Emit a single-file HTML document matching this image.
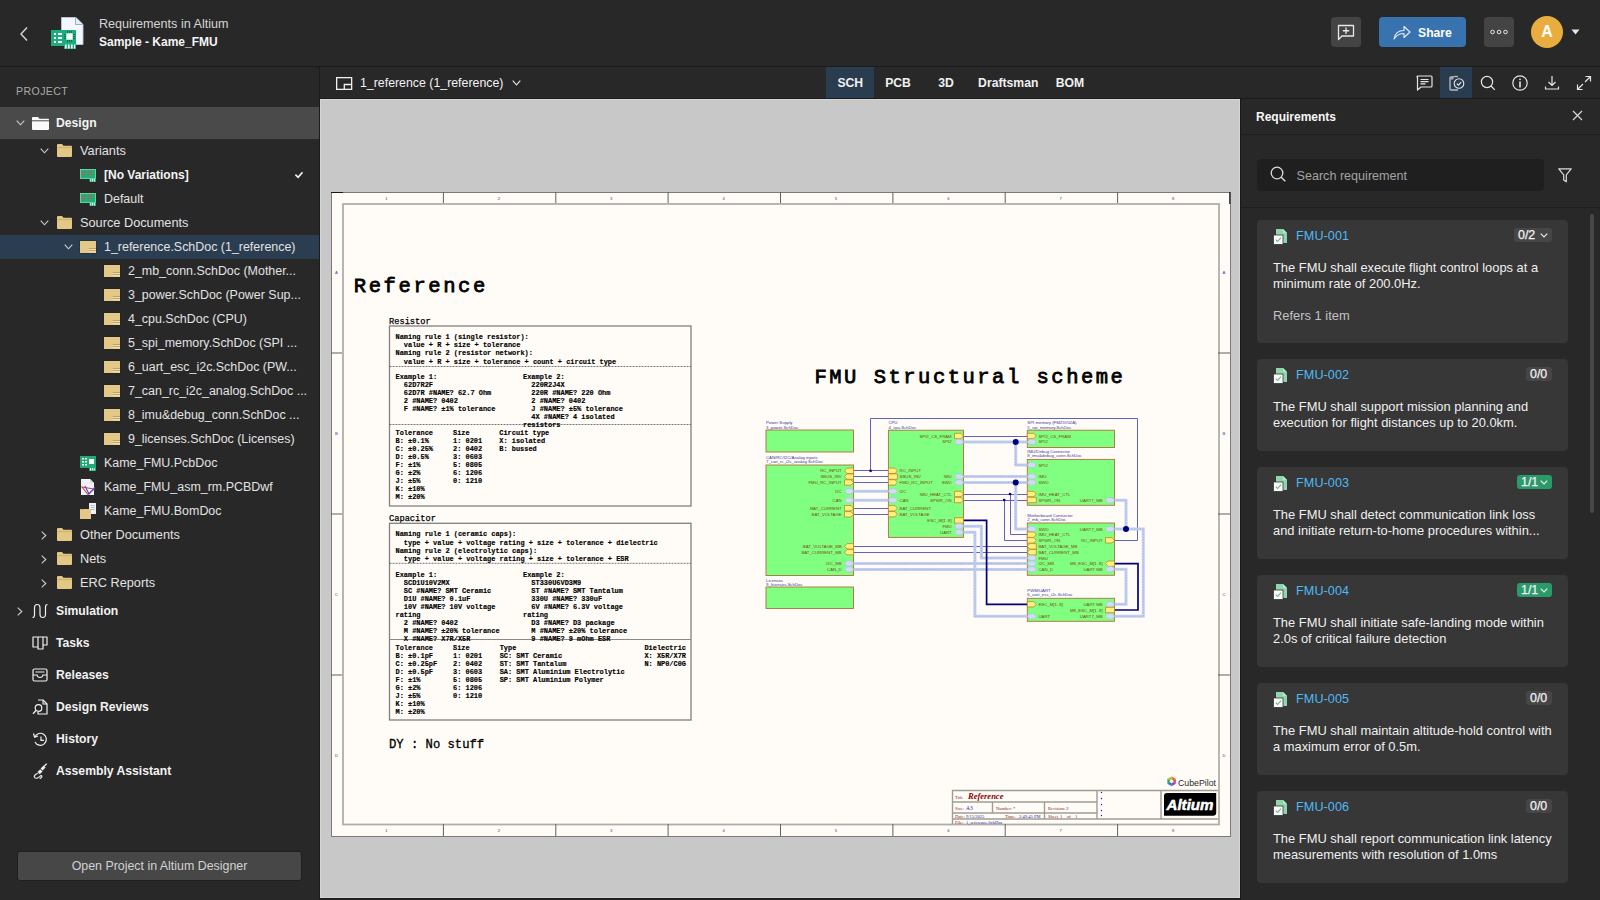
<!DOCTYPE html>
<html><head><meta charset="utf-8">
<style>
*{margin:0;padding:0;box-sizing:border-box}
html,body{width:1600px;height:900px;overflow:hidden;background:#282828;font-family:"Liberation Sans",sans-serif;color:#e0e0e0}
.a{position:absolute}
#hdr{left:0;top:0;width:1600px;height:67px;background:#282828;border-bottom:1px solid #1b1b1b}
#side{left:0;top:67px;width:320px;height:833px;background:#282828;border-right:1px solid #1b1b1b}
#tb{left:320px;top:67px;width:1280px;height:32px;background:#282828;border-bottom:1px solid #1b1b1b}
#canvas{left:320px;top:99px;width:920px;height:800px;background:#c8c8c8;overflow:hidden;border-bottom:1px solid #181818}
#cvhl{left:320px;top:99px;width:920px;height:799px;border:1px solid #d6d6d6;pointer-events:none}
#rp{left:1240px;top:99px;width:360px;height:801px;background:#282828;border-left:1px solid #181818}
.row{position:absolute;left:0;width:319px;height:24px;font-size:12.6px;line-height:24px;color:#dcdcdc;white-space:nowrap}
.row span{position:absolute;top:0}
.chev{position:absolute;width:8px;height:8px}
.card{position:absolute;left:17px;width:311px;background:#363636;border-radius:6px}
.card .id{position:absolute;left:40px;top:7px;font-size:12.2px;color:#5cb8ef;line-height:16px}
.card .txt{position:absolute;left:16px;top:39px;width:290px;font-size:12.6px;line-height:16px;color:#ececec}
.badge{position:absolute;top:8px;height:14px;border-radius:3px;background:#424242;font-size:11.5px;line-height:14px;color:#e6e6e6;padding:0 4px;font-weight:bold}
.badge.g{background:#2c9a6c}
.tab{position:absolute;top:1px;height:31px;line-height:31px;font-size:12.2px;font-weight:bold;color:#f0f0f0;text-align:center}
.ib{position:absolute;top:0;width:32px;height:31px}
.ni{position:absolute;left:0;width:319px;height:32px;font-size:12px;font-weight:bold;color:#f2f2f2;line-height:32px}
</style></head><body>

<!-- HEADER -->
<div id="hdr" class="a">
  <svg class="a" style="left:18px;top:26px" width="12" height="16" viewBox="0 0 12 16"><path d="M9 1.5 L3 8 L9 14.5" fill="none" stroke="#d8d8d8" stroke-width="1.4"/></svg>
  <svg class="a" style="left:48px;top:14px" width="40" height="38" viewBox="48 14 40 38">
    <path d="M61.5 17.5 H76 L83 24.5 V44.5 H61.5 Z" fill="#f2f8fd" stroke="#b8c6d8" stroke-width="0.9"/>
    <path d="M75.5 17.5 V24.5 H82.5" fill="#e4edf6" stroke="#97a6ba" stroke-width="0.9"/>
    <rect x="51" y="30" width="25" height="16" fill="#1bae7c"/>
    <rect x="64" y="44" width="12" height="5" fill="#1bae7c"/>
    <rect x="54" y="33" width="2" height="2" fill="#fff"/><rect x="58" y="33" width="4" height="2" fill="#fff"/>
    <rect x="54" y="37" width="2" height="2" fill="#fff"/><rect x="58" y="37" width="4" height="2" fill="#fff"/>
    <rect x="54" y="41" width="2" height="2" fill="#fff"/><rect x="58" y="41" width="4" height="2" fill="#fff"/>
    <path d="M67.5 31 V33 M69.5 31 V33 M71.5 31 V33 M67.5 40 V42 M69.5 40 V42 M71.5 40 V42 M64 34.5 H66 M64 36.5 H66 M64 38.5 H66 M73 34.5 H75 M73 36.5 H75 M73 38.5 H75" stroke="#0b5c3e" stroke-width="0.8"/>
    <rect x="66.3" y="33.3" width="6.4" height="6.4" fill="#fbfbfb"/>
    <rect x="65" y="44.5" width="1.6" height="4" fill="#fff"/><rect x="68" y="44.5" width="1.6" height="4" fill="#fff"/><rect x="71" y="44.5" width="1.6" height="4" fill="#fff"/><rect x="74" y="44.5" width="1.2" height="4" fill="#fff"/>
  </svg>
  <div class="a" style="left:99px;top:16px;font-size:12.6px;color:#d6d6d6;line-height:17px;white-space:nowrap">Requirements in Altium</div>
  <div class="a" style="left:99px;top:34px;font-size:12px;font-weight:bold;color:#f4f4f4;line-height:17px;white-space:nowrap">Sample - Kame_FMU</div>

  <div class="a" style="left:1331px;top:17px;width:30px;height:30px;border-radius:4px;background:#444"></div>
  <svg class="a" style="left:1337px;top:24px" width="18" height="18" viewBox="0 0 18 18"><path d="M1.5 1.5 H16.5 V12 H5 L1.5 15.5 Z" fill="none" stroke="#e8e8e8" stroke-width="1.3" stroke-linejoin="round"/><path d="M9 3.5 V10 M5.8 6.75 H12.2" stroke="#e8e8e8" stroke-width="1.3"/></svg>
  <div class="a" style="left:1379px;top:17px;width:87px;height:30px;border-radius:4px;background:#3873b0"></div>
  <svg class="a" style="left:1393px;top:25px" width="18" height="15" viewBox="0 0 18 15"><path d="M1 14 C2 8 6 5.5 11 5.5 V1.5 L17 7 L11 12.5 V8.5 C7 8.5 3.5 10 1 14 Z" fill="none" stroke="#e8eef6" stroke-width="1.1" stroke-linejoin="round"/></svg>
  <div class="a" style="left:1418px;top:24.5px;font-size:12.2px;font-weight:bold;color:#fff;line-height:17px">Share</div>
  <div class="a" style="left:1484px;top:17px;width:30px;height:30px;border-radius:4px;background:#444"></div>
  <svg class="a" style="left:1489px;top:29px" width="20" height="6" viewBox="0 0 20 6"><circle cx="3.5" cy="3" r="1.8" fill="none" stroke="#e8e8e8" stroke-width="1"/><circle cx="10" cy="3" r="1.8" fill="none" stroke="#e8e8e8" stroke-width="1"/><circle cx="16.5" cy="3" r="1.8" fill="none" stroke="#e8e8e8" stroke-width="1"/></svg>
  <div class="a" style="left:1531px;top:16px;width:32px;height:32px;border-radius:50%;background:#e8ad3e;color:#fff;font-size:16px;font-weight:bold;text-align:center;line-height:32px">A</div>
  <svg class="a" style="left:1571px;top:29px" width="9" height="6" viewBox="0 0 9 6"><path d="M0.5 0.5 H8.5 L4.5 5.5 Z" fill="#e8e8e8"/></svg>
</div>

<!-- SIDEBAR -->
<div id="side" class="a">
<div class="a" style="left:16px;top:17px;font-size:10.6px;letter-spacing:0.4px;color:#a9a9a9;line-height:14px">PROJECT</div>
<div class="a" style="left:0;top:40px;width:319px;height:32px;background:#4a4a4a"></div>
<svg class="a" style="left:16px;top:53px" width="9" height="6" viewBox="0 0 9 6"><path d="M0.7 0.7 L4.5 4.8 L8.3 0.7" fill="none" stroke="#cfcfcf" stroke-width="1.1"/></svg>
<svg class="a" style="left:32px;top:50px" width="17" height="13" viewBox="0 0 17 13"><path d="M0 1 Q0 0 1 0 H6 L7.5 1.8 H16 Q17 1.8 17 2.8 V12 Q17 13 16 13 H1 Q0 13 0 12 Z" fill="#fafafa"/><rect x="0" y="3.3" width="17" height="1" fill="#4a4a4a"/></svg>
<div class="a" style="left:56px;top:47px;font-size:12.2px;font-weight:bold;color:#f4f4f4;line-height:18px">Design</div>
<div class="a" style="left:0;top:168px;width:319px;height:24px;background:#2a3d51"></div>
<svg class="a" style="left:40px;top:81px" width="9" height="6" viewBox="0 0 9 6"><path d="M0.7 0.7 L4.5 4.8 L8.3 0.7" fill="none" stroke="#cfcfcf" stroke-width="1.1"/></svg>
<svg class="a" style="left:57px;top:77px" width="15" height="13" viewBox="0 0 15 13"><path d="M0 1 Q0 0 1 0 H5 L6.5 1.8 H14 Q15 1.8 15 2.8 V12 Q15 13 14 13 H1 Q0 13 0 12 Z" fill="#e2c787"/><rect x="0" y="3.2" width="15" height="0.9" fill="#c9ad6a"/></svg>
<div class="a" style="left:80px;top:75px;font-size:12.45px;color:#e2e2e2;line-height:18px;white-space:nowrap;font-size:12.75px;">Variants</div>
<svg class="a" style="left:80px;top:102px" width="16" height="13" viewBox="0 0 16 13"><rect x="0" y="0" width="16" height="10" fill="#1fae78"/><rect x="9.5" y="8" width="6.5" height="5" fill="#1fae78"/><rect x="0.5" y="0.5" width="15" height="9" fill="none" stroke="#8adcb8" stroke-width="0.7"/><path d="M1.8 2.5 L5.2 6.5 M5.2 2.5 L1.8 6.5 M8.5 1.8 L11.9 5.8 M11.9 1.8 L8.5 5.8" stroke="#f04848" stroke-width="1"/><path d="M10.8 10 V12.5 M12.6 10 V12.5 M14.4 10 V12.5" stroke="#fff" stroke-width="0.9"/></svg>
<div class="a" style="left:104px;top:99px;font-size:12.45px;color:#e2e2e2;line-height:18px;white-space:nowrap;font-weight:bold;font-size:12px;color:#f4f4f4;">[No Variations]</div>
<svg class="a" style="left:80px;top:126px" width="16" height="13" viewBox="0 0 16 13"><rect x="0" y="0" width="16" height="10" fill="#1fae78"/><rect x="9.5" y="8" width="6.5" height="5" fill="#1fae78"/><rect x="0.5" y="0.5" width="15" height="9" fill="none" stroke="#8adcb8" stroke-width="0.7"/><path d="M1.8 2.5 L5.2 6.5 M5.2 2.5 L1.8 6.5 M8.5 1.8 L11.9 5.8 M11.9 1.8 L8.5 5.8" stroke="#f04848" stroke-width="1"/><path d="M10.8 10 V12.5 M12.6 10 V12.5 M14.4 10 V12.5" stroke="#fff" stroke-width="0.9"/></svg>
<div class="a" style="left:104px;top:123px;font-size:12.45px;color:#e2e2e2;line-height:18px;white-space:nowrap;">Default</div>
<svg class="a" style="left:40px;top:153px" width="9" height="6" viewBox="0 0 9 6"><path d="M0.7 0.7 L4.5 4.8 L8.3 0.7" fill="none" stroke="#cfcfcf" stroke-width="1.1"/></svg>
<svg class="a" style="left:57px;top:149px" width="15" height="13" viewBox="0 0 15 13"><path d="M0 1 Q0 0 1 0 H5 L6.5 1.8 H14 Q15 1.8 15 2.8 V12 Q15 13 14 13 H1 Q0 13 0 12 Z" fill="#e2c787"/><rect x="0" y="3.2" width="15" height="0.9" fill="#c9ad6a"/></svg>
<div class="a" style="left:80px;top:147px;font-size:12.45px;color:#e2e2e2;line-height:18px;white-space:nowrap;font-size:12.75px;">Source Documents</div>
<svg class="a" style="left:64px;top:177px" width="9" height="6" viewBox="0 0 9 6"><path d="M0.7 0.7 L4.5 4.8 L8.3 0.7" fill="none" stroke="#cfcfcf" stroke-width="1.1"/></svg>
<svg class="a" style="left:79px;top:173px" width="18" height="14" viewBox="-1 -1 18 14"><rect x="-0.5" y="-0.5" width="17" height="13" fill="#1f1f1f" opacity="0.6"/><rect x="0" y="0" width="16" height="12" fill="#e3c888"/><rect x="9" y="7" width="7" height="1" fill="#bba262"/><rect x="9" y="8" width="7" height="1.2" fill="#f0dfae"/><rect x="9" y="9.2" width="7" height="0.9" fill="#bba262"/><rect x="9" y="10.1" width="7" height="1.4" fill="#f0dfae"/></svg>
<div class="a" style="left:104px;top:171px;font-size:12.45px;color:#e2e2e2;line-height:18px;white-space:nowrap;">1_reference.SchDoc (1_reference)</div>
<svg class="a" style="left:103px;top:197px" width="18" height="14" viewBox="-1 -1 18 14"><rect x="-0.5" y="-0.5" width="17" height="13" fill="#1f1f1f" opacity="0.6"/><rect x="0" y="0" width="16" height="12" fill="#e3c888"/><rect x="9" y="7" width="7" height="1" fill="#bba262"/><rect x="9" y="8" width="7" height="1.2" fill="#f0dfae"/><rect x="9" y="9.2" width="7" height="0.9" fill="#bba262"/><rect x="9" y="10.1" width="7" height="1.4" fill="#f0dfae"/></svg>
<div class="a" style="left:128px;top:195px;font-size:12.45px;color:#e2e2e2;line-height:18px;white-space:nowrap;">2_mb_conn.SchDoc (Mother...</div>
<svg class="a" style="left:103px;top:221px" width="18" height="14" viewBox="-1 -1 18 14"><rect x="-0.5" y="-0.5" width="17" height="13" fill="#1f1f1f" opacity="0.6"/><rect x="0" y="0" width="16" height="12" fill="#e3c888"/><rect x="9" y="7" width="7" height="1" fill="#bba262"/><rect x="9" y="8" width="7" height="1.2" fill="#f0dfae"/><rect x="9" y="9.2" width="7" height="0.9" fill="#bba262"/><rect x="9" y="10.1" width="7" height="1.4" fill="#f0dfae"/></svg>
<div class="a" style="left:128px;top:219px;font-size:12.45px;color:#e2e2e2;line-height:18px;white-space:nowrap;">3_power.SchDoc (Power Sup...</div>
<svg class="a" style="left:103px;top:245px" width="18" height="14" viewBox="-1 -1 18 14"><rect x="-0.5" y="-0.5" width="17" height="13" fill="#1f1f1f" opacity="0.6"/><rect x="0" y="0" width="16" height="12" fill="#e3c888"/><rect x="9" y="7" width="7" height="1" fill="#bba262"/><rect x="9" y="8" width="7" height="1.2" fill="#f0dfae"/><rect x="9" y="9.2" width="7" height="0.9" fill="#bba262"/><rect x="9" y="10.1" width="7" height="1.4" fill="#f0dfae"/></svg>
<div class="a" style="left:128px;top:243px;font-size:12.45px;color:#e2e2e2;line-height:18px;white-space:nowrap;">4_cpu.SchDoc (CPU)</div>
<svg class="a" style="left:103px;top:269px" width="18" height="14" viewBox="-1 -1 18 14"><rect x="-0.5" y="-0.5" width="17" height="13" fill="#1f1f1f" opacity="0.6"/><rect x="0" y="0" width="16" height="12" fill="#e3c888"/><rect x="9" y="7" width="7" height="1" fill="#bba262"/><rect x="9" y="8" width="7" height="1.2" fill="#f0dfae"/><rect x="9" y="9.2" width="7" height="0.9" fill="#bba262"/><rect x="9" y="10.1" width="7" height="1.4" fill="#f0dfae"/></svg>
<div class="a" style="left:128px;top:267px;font-size:12.45px;color:#e2e2e2;line-height:18px;white-space:nowrap;">5_spi_memory.SchDoc (SPI ...</div>
<svg class="a" style="left:103px;top:293px" width="18" height="14" viewBox="-1 -1 18 14"><rect x="-0.5" y="-0.5" width="17" height="13" fill="#1f1f1f" opacity="0.6"/><rect x="0" y="0" width="16" height="12" fill="#e3c888"/><rect x="9" y="7" width="7" height="1" fill="#bba262"/><rect x="9" y="8" width="7" height="1.2" fill="#f0dfae"/><rect x="9" y="9.2" width="7" height="0.9" fill="#bba262"/><rect x="9" y="10.1" width="7" height="1.4" fill="#f0dfae"/></svg>
<div class="a" style="left:128px;top:291px;font-size:12.45px;color:#e2e2e2;line-height:18px;white-space:nowrap;">6_uart_esc_i2c.SchDoc (PW...</div>
<svg class="a" style="left:103px;top:317px" width="18" height="14" viewBox="-1 -1 18 14"><rect x="-0.5" y="-0.5" width="17" height="13" fill="#1f1f1f" opacity="0.6"/><rect x="0" y="0" width="16" height="12" fill="#e3c888"/><rect x="9" y="7" width="7" height="1" fill="#bba262"/><rect x="9" y="8" width="7" height="1.2" fill="#f0dfae"/><rect x="9" y="9.2" width="7" height="0.9" fill="#bba262"/><rect x="9" y="10.1" width="7" height="1.4" fill="#f0dfae"/></svg>
<div class="a" style="left:128px;top:315px;font-size:12.45px;color:#e2e2e2;line-height:18px;white-space:nowrap;">7_can_rc_i2c_analog.SchDoc ...</div>
<svg class="a" style="left:103px;top:341px" width="18" height="14" viewBox="-1 -1 18 14"><rect x="-0.5" y="-0.5" width="17" height="13" fill="#1f1f1f" opacity="0.6"/><rect x="0" y="0" width="16" height="12" fill="#e3c888"/><rect x="9" y="7" width="7" height="1" fill="#bba262"/><rect x="9" y="8" width="7" height="1.2" fill="#f0dfae"/><rect x="9" y="9.2" width="7" height="0.9" fill="#bba262"/><rect x="9" y="10.1" width="7" height="1.4" fill="#f0dfae"/></svg>
<div class="a" style="left:128px;top:339px;font-size:12.45px;color:#e2e2e2;line-height:18px;white-space:nowrap;">8_imu&amp;debug_conn.SchDoc ...</div>
<svg class="a" style="left:103px;top:365px" width="18" height="14" viewBox="-1 -1 18 14"><rect x="-0.5" y="-0.5" width="17" height="13" fill="#1f1f1f" opacity="0.6"/><rect x="0" y="0" width="16" height="12" fill="#e3c888"/><rect x="9" y="7" width="7" height="1" fill="#bba262"/><rect x="9" y="8" width="7" height="1.2" fill="#f0dfae"/><rect x="9" y="9.2" width="7" height="0.9" fill="#bba262"/><rect x="9" y="10.1" width="7" height="1.4" fill="#f0dfae"/></svg>
<div class="a" style="left:128px;top:363px;font-size:12.45px;color:#e2e2e2;line-height:18px;white-space:nowrap;">9_licenses.SchDoc (Licenses)</div>
<svg class="a" style="left:80px;top:389px" width="16" height="15" viewBox="0 0 16 15"><rect x="0" y="0" width="16" height="12" fill="#22a872"/><rect x="9" y="10" width="7" height="5" fill="#22a872"/><rect x="2" y="2" width="2" height="1.5" fill="#fff"/><rect x="5" y="2" width="2" height="1.5" fill="#fff"/><rect x="2" y="5" width="2" height="1.5" fill="#fff"/><rect x="5" y="5" width="2" height="1.5" fill="#fff"/><rect x="2" y="8" width="2" height="1.5" fill="#fff"/><rect x="5" y="8" width="2" height="1.5" fill="#fff"/><rect x="9" y="3" width="5" height="5" fill="#fff"/><path d="M10.5 12 V14.5 M12.3 12 V14.5 M14.1 12 V14.5" stroke="#fff" stroke-width="0.9"/></svg>
<div class="a" style="left:104px;top:387px;font-size:12.45px;color:#e2e2e2;line-height:18px;white-space:nowrap;">Kame_FMU.PcbDoc</div>
<svg class="a" style="left:80px;top:412px" width="16" height="16" viewBox="0 0 16 16"><path d="M1 0 H10 L14 4 V16 H1 Z" fill="#f2f2f6"/><path d="M10 0 V4 H14" fill="#d8d8e0"/><path d="M2 8 L14 10 L8 15.5 Z" fill="none" stroke="#e04040" stroke-width="1.1"/><path d="M5 7 L9 15 L15 8" fill="none" stroke="#3a5ad0" stroke-width="1.1"/></svg>
<div class="a" style="left:104px;top:411px;font-size:12.45px;color:#e2e2e2;line-height:18px;white-space:nowrap;">Kame_FMU_asm_rm.PCBDwf</div>
<svg class="a" style="left:80px;top:436px" width="16" height="16" viewBox="0 0 16 16"><path d="M9 0 H16 V11 H9 Z" fill="#eef0f6"/><path d="M10.5 2.5 H14.5 M10.5 4.5 H14.5 M10.5 6.5 H14.5" stroke="#9aa" stroke-width="0.7"/><rect x="0" y="6" width="11" height="10" fill="#e3c888"/><path d="M0 6 H3 L4 7 H11" fill="#c9ad6a"/></svg>
<div class="a" style="left:104px;top:435px;font-size:12.45px;color:#e2e2e2;line-height:18px;white-space:nowrap;">Kame_FMU.BomDoc</div>
<svg class="a" style="left:41px;top:464px" width="6" height="9" viewBox="0 0 6 9"><path d="M0.7 0.7 L4.8 4.5 L0.7 8.3" fill="none" stroke="#cfcfcf" stroke-width="1.1"/></svg>
<svg class="a" style="left:57px;top:461px" width="15" height="13" viewBox="0 0 15 13"><path d="M0 1 Q0 0 1 0 H5 L6.5 1.8 H14 Q15 1.8 15 2.8 V12 Q15 13 14 13 H1 Q0 13 0 12 Z" fill="#e2c787"/><rect x="0" y="3.2" width="15" height="0.9" fill="#c9ad6a"/></svg>
<div class="a" style="left:80px;top:459px;font-size:12.45px;color:#e2e2e2;line-height:18px;white-space:nowrap;font-size:12.75px;">Other Documents</div>
<svg class="a" style="left:41px;top:488px" width="6" height="9" viewBox="0 0 6 9"><path d="M0.7 0.7 L4.8 4.5 L0.7 8.3" fill="none" stroke="#cfcfcf" stroke-width="1.1"/></svg>
<svg class="a" style="left:57px;top:485px" width="15" height="13" viewBox="0 0 15 13"><path d="M0 1 Q0 0 1 0 H5 L6.5 1.8 H14 Q15 1.8 15 2.8 V12 Q15 13 14 13 H1 Q0 13 0 12 Z" fill="#e2c787"/><rect x="0" y="3.2" width="15" height="0.9" fill="#c9ad6a"/></svg>
<div class="a" style="left:80px;top:483px;font-size:12.45px;color:#e2e2e2;line-height:18px;white-space:nowrap;font-size:12.75px;">Nets</div>
<svg class="a" style="left:41px;top:512px" width="6" height="9" viewBox="0 0 6 9"><path d="M0.7 0.7 L4.8 4.5 L0.7 8.3" fill="none" stroke="#cfcfcf" stroke-width="1.1"/></svg>
<svg class="a" style="left:57px;top:509px" width="15" height="13" viewBox="0 0 15 13"><path d="M0 1 Q0 0 1 0 H5 L6.5 1.8 H14 Q15 1.8 15 2.8 V12 Q15 13 14 13 H1 Q0 13 0 12 Z" fill="#e2c787"/><rect x="0" y="3.2" width="15" height="0.9" fill="#c9ad6a"/></svg>
<div class="a" style="left:80px;top:507px;font-size:12.45px;color:#e2e2e2;line-height:18px;white-space:nowrap;font-size:12.75px;">ERC Reports</div>
<svg class="a" style="left:293px;top:104px" width="10" height="8" viewBox="0 0 10 8"><path d="M2.4 3.7 L5.1 6.3 L9.5 1.3" fill="none" stroke="#f4f4f4" stroke-width="1.6"/></svg>
<svg class="a" style="left:17px;top:540px" width="6" height="9" viewBox="0 0 6 9"><path d="M0.7 0.7 L4.8 4.5 L0.7 8.3" fill="none" stroke="#cfcfcf" stroke-width="1.1"/></svg>
<svg class="a" style="left:32px;top:536px" width="16" height="16" viewBox="0 0 16 16"><path d="M0.5 14.5 Q2.5 14.5 2.5 12 V5 Q2.5 1.5 5.25 1.5 Q8 1.5 8 5 V11 Q8 14.5 10.75 14.5 Q13.5 14.5 13.5 11 V4 Q13.5 1.5 15.5 1.5" fill="none" stroke="#f0f0f0" stroke-width="1.2"/></svg>
<div class="a" style="left:56px;top:535px;font-size:12.2px;font-weight:bold;color:#f2f2f2;line-height:18px;white-space:nowrap">Simulation</div>
<svg class="a" style="left:32px;top:568px" width="16" height="16" viewBox="0 0 16 16"><path d="M1 2 H15 V10 H11 V14 H6 V12 H1 Z" fill="none" stroke="#f0f0f0" stroke-width="1.2" stroke-linejoin="round"/><path d="M6 2 V12 M11 2 V10" stroke="#f0f0f0" stroke-width="1.2"/></svg>
<div class="a" style="left:56px;top:567px;font-size:12.2px;font-weight:bold;color:#f2f2f2;line-height:18px;white-space:nowrap">Tasks</div>
<svg class="a" style="left:32px;top:600px" width="16" height="16" viewBox="0 0 16 16"><rect x="1" y="2" width="14" height="12" rx="1.5" fill="none" stroke="#f0f0f0" stroke-width="1.2"/><path d="M3.5 5 H12.5 M1 8 H5 Q5.5 10.5 8 10.5 Q10.5 10.5 11 8 H15" fill="none" stroke="#f0f0f0" stroke-width="1.2"/></svg>
<div class="a" style="left:56px;top:599px;font-size:12.2px;font-weight:bold;color:#f2f2f2;line-height:18px;white-space:nowrap">Releases</div>
<svg class="a" style="left:32px;top:632px" width="16" height="16" viewBox="0 0 16 16"><path d="M6 1 H11 L15 5 V15 H6 V13" fill="none" stroke="#f0f0f0" stroke-width="1.2" stroke-linejoin="round"/><path d="M11 1 V5 H15" fill="none" stroke="#f0f0f0" stroke-width="1.1"/><circle cx="6.5" cy="9" r="3.3" fill="#282828" stroke="#f0f0f0" stroke-width="1.2"/><path d="M4 11.5 L1 14.8" stroke="#f0f0f0" stroke-width="1.3"/></svg>
<div class="a" style="left:56px;top:631px;font-size:12.2px;font-weight:bold;color:#f2f2f2;line-height:18px;white-space:nowrap">Design Reviews</div>
<svg class="a" style="left:32px;top:664px" width="16" height="16" viewBox="0 0 16 16"><path d="M2.8 6 A6 6 0 1 1 3 11" fill="none" stroke="#f0f0f0" stroke-width="1.2"/><path d="M1.5 2.5 L2.6 6.2 L6 5" fill="none" stroke="#f0f0f0" stroke-width="1.2"/><path d="M9 5.5 V9.3 H12" fill="none" stroke="#f0f0f0" stroke-width="1.2"/></svg>
<div class="a" style="left:56px;top:663px;font-size:12.2px;font-weight:bold;color:#f2f2f2;line-height:18px;white-space:nowrap">History</div>
<svg class="a" style="left:32px;top:696px" width="16" height="16" viewBox="0 0 16 16"><path d="M14.8 0.6 L12.2 3.2" stroke="#f0f0f0" stroke-width="1.3"/><path d="M12.6 3.6 L9.6 6.6" stroke="#f0f0f0" stroke-width="2.8"/><path d="M9.4 7.4 L6.6 10.2" stroke="#f0f0f0" stroke-width="3.2"/><path d="M5.8 10.2 Q2.6 11.2 2.2 13.6 Q2.6 15.6 5 15.2 Q7.2 14.2 8.6 12.8 Q10 12.2 9.8 13.8 Q9.2 15.4 7.6 15.6" fill="none" stroke="#f0f0f0" stroke-width="1.1"/></svg>
<div class="a" style="left:56px;top:695px;font-size:12.2px;font-weight:bold;color:#f2f2f2;line-height:18px;white-space:nowrap">Assembly Assistant</div>
<div class="a" style="left:17px;top:784px;width:285px;height:30px;background:#474747;border:1px solid #1e1e1e;border-radius:3px;font-size:12.4px;color:#d2d2d2;text-align:center;line-height:28px">Open Project in Altium Designer</div>
</div>

<!-- TOOLBAR -->
<div id="tb" class="a">
<svg class="a" style="left:16px;top:10px" width="17" height="13" viewBox="0 0 17 13"><rect x="0.65" y="0.65" width="15" height="11.7" fill="none" stroke="#f0f0f0" stroke-width="1.3"/><path d="M8.3 12.2 V7.5 H15.6" fill="none" stroke="#f0f0f0" stroke-width="1.3"/></svg>
<div class="a" style="left:40px;top:7px;font-size:12.35px;color:#f2f2f2;line-height:18px;white-space:nowrap">1_reference (1_reference)</div>
<svg class="a" style="left:192px;top:13px" width="9" height="6" viewBox="0 0 9 6"><path d="M0.7 0.7 L4.5 4.8 L8.3 0.7" fill="none" stroke="#e0e0e0" stroke-width="1.2"/></svg>
<div class="a" style="left:506px;top:0;width:48px;height:31px;background:#2a3c50"></div>
<div class="tab" style="left:497.5px;width:65.5px">SCH</div>
<div class="tab" style="left:546px;width:64px">PCB</div>
<div class="tab" style="left:598px;width:56px">3D</div>
<div class="tab" style="left:638.5px;width:99.5px">Draftsman</div>
<div class="tab" style="left:716.4000000000001px;width:67.19999999999982px">BOM</div>
<div class="a" style="left:1120px;top:0;width:32px;height:31px;background:#2a3c50"></div>
<svg class="a" style="left:1096px;top:8px" width="17" height="17" viewBox="0 0 17 17"><path d="M1 2 Q1 1 2 1 H15 Q16 1 16 2 V11 Q16 12 15 12 H5 L1.5 15 V2 Z" stroke="#e6e6e6" fill="none" stroke-width="1.2" stroke-linejoin="round"/><path d="M4.5 4.5 H12.5 M4.5 6.7 H12.5 M4.5 8.9 H9.5" stroke="#e6e6e6" fill="none" stroke-width="1.2"/></svg>
<svg class="a" style="left:1128px;top:8px" width="17" height="17" viewBox="0 0 17 17"><path d="M5.5 2 H3 Q2 2 2 3 V14 Q2 15 3 15 H10" stroke="#bdbdbd" fill="none" stroke-width="1.3"/><path d="M2.5 4 L5 1.5 V4 Z" stroke="#bdbdbd" fill="none" stroke-width="1"/><path d="M6 1.5 H10" stroke="#bdbdbd" stroke-width="1.3"/><circle cx="11" cy="8.5" r="4.8" stroke="#e6e6e6" fill="#2a3c50" stroke-width="1.1"/><path d="M8.8 8.6 L10.4 10.2 L13.2 7.2" stroke="#e6e6e6" fill="none" stroke-width="1.2"/></svg>
<svg class="a" style="left:1160px;top:8px" width="17" height="17" viewBox="0 0 17 17"><circle cx="7" cy="7" r="5.6" stroke="#e6e6e6" fill="none" stroke-width="1.2" stroke-width="1.3"/><path d="M11 11 L14.8 14.8" stroke="#e6e6e6" fill="none" stroke-width="1.2" stroke-width="1.4"/></svg>
<svg class="a" style="left:1192px;top:8px" width="17" height="17" viewBox="0 0 17 17"><circle cx="8" cy="8" r="7.2" stroke="#e6e6e6" fill="none" stroke-width="1.2"/><path d="M8 6.5 V12.5" stroke="#e6e6e6" stroke-width="1.6"/><circle cx="8" cy="4.3" r="0.9" fill="#e6e6e6"/></svg>
<svg class="a" style="left:1224px;top:8px" width="17" height="17" viewBox="0 0 17 17"><path d="M8 1 V10.5 M4.5 7 L8 10.5 L11.5 7" stroke="#e6e6e6" fill="none" stroke-width="1.2" stroke-width="1.4"/><path d="M1.5 11.5 V14 H14.5 V11.5" stroke="#e6e6e6" fill="none" stroke-width="1.2" stroke-width="1.3"/></svg>
<svg class="a" style="left:1256px;top:8px" width="17" height="17" viewBox="0 0 17 17"><path d="M9.5 1.5 H14.5 V6.5 M14.5 1.5 L9 7 M6.5 14.5 H1.5 V9.5 M1.5 14.5 L7 9" stroke="#e6e6e6" fill="none" stroke-width="1.2" stroke-width="1.3"/></svg>
</div>

<!-- CANVAS -->
<div id="canvas" class="a">
<svg class="a" style="left:0;top:0" width="920" height="801" viewBox="320 99 920 801">
<rect x="331" y="192" width="899" height="644" fill="#fffcf7"/>
<rect x="331.5" y="192.5" width="899" height="644" fill="none" stroke="#7a7a7a" stroke-width="1"/>
<path d="M331 192.5 H343 M1229.8 192 V204" stroke="#1a1a1a" stroke-width="1.2"/>
<rect x="343" y="204" width="876" height="620.5" fill="none" stroke="#b0aea8" stroke-width="1.8"/>
<path d="M443.4 192 V203 M443.4 824 V836" stroke="#606060" stroke-width="1"/>
<path d="M555.8 192 V203 M555.8 824 V836" stroke="#606060" stroke-width="1"/>
<path d="M668.1 192 V203 M668.1 824 V836" stroke="#606060" stroke-width="1"/>
<path d="M780.5 192 V203 M780.5 824 V836" stroke="#606060" stroke-width="1"/>
<path d="M892.9 192 V203 M892.9 824 V836" stroke="#606060" stroke-width="1"/>
<path d="M1005.2 192 V203 M1005.2 824 V836" stroke="#606060" stroke-width="1"/>
<path d="M1117.6 192 V203 M1117.6 824 V836" stroke="#606060" stroke-width="1"/>
<text x="386.5" y="200" font-family="Liberation Sans" font-size="4.2" fill="#3a3a90" text-anchor="middle">1</text>
<text x="386.5" y="832" font-family="Liberation Sans" font-size="4.2" fill="#3a3a90" text-anchor="middle">1</text>
<text x="498.9" y="200" font-family="Liberation Sans" font-size="4.2" fill="#3a3a90" text-anchor="middle">2</text>
<text x="498.9" y="832" font-family="Liberation Sans" font-size="4.2" fill="#3a3a90" text-anchor="middle">2</text>
<text x="611.2" y="200" font-family="Liberation Sans" font-size="4.2" fill="#3a3a90" text-anchor="middle">3</text>
<text x="611.2" y="832" font-family="Liberation Sans" font-size="4.2" fill="#3a3a90" text-anchor="middle">3</text>
<text x="723.6" y="200" font-family="Liberation Sans" font-size="4.2" fill="#3a3a90" text-anchor="middle">4</text>
<text x="723.6" y="832" font-family="Liberation Sans" font-size="4.2" fill="#3a3a90" text-anchor="middle">4</text>
<text x="836.0" y="200" font-family="Liberation Sans" font-size="4.2" fill="#3a3a90" text-anchor="middle">5</text>
<text x="836.0" y="832" font-family="Liberation Sans" font-size="4.2" fill="#3a3a90" text-anchor="middle">5</text>
<text x="948.4" y="200" font-family="Liberation Sans" font-size="4.2" fill="#3a3a90" text-anchor="middle">6</text>
<text x="948.4" y="832" font-family="Liberation Sans" font-size="4.2" fill="#3a3a90" text-anchor="middle">6</text>
<text x="1060.7" y="200" font-family="Liberation Sans" font-size="4.2" fill="#3a3a90" text-anchor="middle">7</text>
<text x="1060.7" y="832" font-family="Liberation Sans" font-size="4.2" fill="#3a3a90" text-anchor="middle">7</text>
<text x="1173.1" y="200" font-family="Liberation Sans" font-size="4.2" fill="#3a3a90" text-anchor="middle">8</text>
<text x="1173.1" y="832" font-family="Liberation Sans" font-size="4.2" fill="#3a3a90" text-anchor="middle">8</text>
<path d="M331 353.0 H342 M1218 353.0 H1230" stroke="#606060" stroke-width="1"/>
<path d="M331 514.0 H342 M1218 514.0 H1230" stroke="#606060" stroke-width="1"/>
<path d="M331 675.0 H342 M1218 675.0 H1230" stroke="#606060" stroke-width="1"/>
<text x="336.5" y="274.0" font-family="Liberation Sans" font-size="4.2" fill="#3a3a90" text-anchor="middle">A</text>
<text x="1224" y="274.0" font-family="Liberation Sans" font-size="4.2" fill="#3a3a90" text-anchor="middle">A</text>
<text x="336.5" y="435.0" font-family="Liberation Sans" font-size="4.2" fill="#3a3a90" text-anchor="middle">B</text>
<text x="1224" y="435.0" font-family="Liberation Sans" font-size="4.2" fill="#3a3a90" text-anchor="middle">B</text>
<text x="336.5" y="596.0" font-family="Liberation Sans" font-size="4.2" fill="#3a3a90" text-anchor="middle">C</text>
<text x="1224" y="596.0" font-family="Liberation Sans" font-size="4.2" fill="#3a3a90" text-anchor="middle">C</text>
<text x="336.5" y="757.0" font-family="Liberation Sans" font-size="4.2" fill="#3a3a90" text-anchor="middle">D</text>
<text x="1224" y="757.0" font-family="Liberation Sans" font-size="4.2" fill="#3a3a90" text-anchor="middle">D</text>
<text x="353.8" y="292" font-family="Liberation Mono" font-size="20.5" letter-spacing="2.6" fill="#000" stroke="#000" stroke-width="0.8">Reference</text>
<text x="389" y="324" font-family="Liberation Mono" font-size="8.7" fill="#000" stroke="#000" stroke-width="0.25">Resistor</text>
<text x="389" y="520.5" font-family="Liberation Mono" font-size="8.7" fill="#000" stroke="#000" stroke-width="0.25">Capacitor</text>
<text x="389" y="747.6" font-family="Liberation Mono" font-size="12.2" fill="#000" stroke="#000" stroke-width="0.3">DY : No stuff</text>
<rect x="389.5" y="326" width="301.5" height="180" fill="none" stroke="#808080" stroke-width="1.3"/>
<path d="M389.5 366.5 H691 M389.5 424.5 H691" stroke="#555" stroke-width="0.8" stroke-dasharray="2 1"/>
<text x="395.5" y="339.4" font-family="Liberation Mono" font-weight="bold" font-size="6.94" fill="#000" stroke="#000" stroke-width="0.15" xml:space="preserve">Naming rule 1 (single resistor):</text>
<text x="395.5" y="347.4" font-family="Liberation Mono" font-weight="bold" font-size="6.94" fill="#000" stroke="#000" stroke-width="0.15" xml:space="preserve">  value + R + size + tolerance</text>
<text x="395.5" y="355.4" font-family="Liberation Mono" font-weight="bold" font-size="6.94" fill="#000" stroke="#000" stroke-width="0.15" xml:space="preserve">Naming rule 2 (resistor network):</text>
<text x="395.5" y="363.9" font-family="Liberation Mono" font-weight="bold" font-size="6.94" fill="#000" stroke="#000" stroke-width="0.15" xml:space="preserve">  value + R + size + tolerance + count + circuit type</text>
<text x="395.5" y="379.09999999999997" font-family="Liberation Mono" font-weight="bold" font-size="6.94" fill="#000" stroke="#000" stroke-width="0.15" xml:space="preserve">Example 1:</text>
<text x="395.5" y="387.15" font-family="Liberation Mono" font-weight="bold" font-size="6.94" fill="#000" stroke="#000" stroke-width="0.15" xml:space="preserve">  62D7R2F</text>
<text x="395.5" y="395.2" font-family="Liberation Mono" font-weight="bold" font-size="6.94" fill="#000" stroke="#000" stroke-width="0.15" xml:space="preserve">  62D7R #NAME? 62.7 Ohm</text>
<text x="395.5" y="403.24999999999994" font-family="Liberation Mono" font-weight="bold" font-size="6.94" fill="#000" stroke="#000" stroke-width="0.15" xml:space="preserve">  2 #NAME? 0402</text>
<text x="395.5" y="411.29999999999995" font-family="Liberation Mono" font-weight="bold" font-size="6.94" fill="#000" stroke="#000" stroke-width="0.15" xml:space="preserve">  F #NAME? ±1% tolerance</text>
<text x="523" y="379.09999999999997" font-family="Liberation Mono" font-weight="bold" font-size="6.94" fill="#000" stroke="#000" stroke-width="0.15" xml:space="preserve">Example 2:</text>
<text x="523" y="387.15" font-family="Liberation Mono" font-weight="bold" font-size="6.94" fill="#000" stroke="#000" stroke-width="0.15" xml:space="preserve">  220R2J4X</text>
<text x="523" y="395.2" font-family="Liberation Mono" font-weight="bold" font-size="6.94" fill="#000" stroke="#000" stroke-width="0.15" xml:space="preserve">  220R #NAME? 220 Ohm</text>
<text x="523" y="403.24999999999994" font-family="Liberation Mono" font-weight="bold" font-size="6.94" fill="#000" stroke="#000" stroke-width="0.15" xml:space="preserve">  2 #NAME? 0402</text>
<text x="523" y="411.29999999999995" font-family="Liberation Mono" font-weight="bold" font-size="6.94" fill="#000" stroke="#000" stroke-width="0.15" xml:space="preserve">  J #NAME? ±5% tolerance</text>
<text x="523" y="419.34999999999997" font-family="Liberation Mono" font-weight="bold" font-size="6.94" fill="#000" stroke="#000" stroke-width="0.15" xml:space="preserve">  4X #NAME? 4 isolated</text>
<text x="523" y="427.4" font-family="Liberation Mono" font-weight="bold" font-size="6.94" fill="#000" stroke="#000" stroke-width="0.15" xml:space="preserve">resistors</text>
<text x="395.5" y="435.09999999999997" font-family="Liberation Mono" font-weight="bold" font-size="6.94" fill="#000" stroke="#000" stroke-width="0.15" xml:space="preserve">Tolerance</text>
<text x="395.5" y="443.08" font-family="Liberation Mono" font-weight="bold" font-size="6.94" fill="#000" stroke="#000" stroke-width="0.15" xml:space="preserve">B: ±0.1%</text>
<text x="395.5" y="451.05999999999995" font-family="Liberation Mono" font-weight="bold" font-size="6.94" fill="#000" stroke="#000" stroke-width="0.15" xml:space="preserve">C: ±0.25%</text>
<text x="395.5" y="459.03999999999996" font-family="Liberation Mono" font-weight="bold" font-size="6.94" fill="#000" stroke="#000" stroke-width="0.15" xml:space="preserve">D: ±0.5%</text>
<text x="395.5" y="467.02" font-family="Liberation Mono" font-weight="bold" font-size="6.94" fill="#000" stroke="#000" stroke-width="0.15" xml:space="preserve">F: ±1%</text>
<text x="395.5" y="475.0" font-family="Liberation Mono" font-weight="bold" font-size="6.94" fill="#000" stroke="#000" stroke-width="0.15" xml:space="preserve">G: ±2%</text>
<text x="395.5" y="482.97999999999996" font-family="Liberation Mono" font-weight="bold" font-size="6.94" fill="#000" stroke="#000" stroke-width="0.15" xml:space="preserve">J: ±5%</text>
<text x="395.5" y="490.96" font-family="Liberation Mono" font-weight="bold" font-size="6.94" fill="#000" stroke="#000" stroke-width="0.15" xml:space="preserve">K: ±10%</text>
<text x="395.5" y="498.93999999999994" font-family="Liberation Mono" font-weight="bold" font-size="6.94" fill="#000" stroke="#000" stroke-width="0.15" xml:space="preserve">M: ±20%</text>
<text x="453" y="435.09999999999997" font-family="Liberation Mono" font-weight="bold" font-size="6.94" fill="#000" stroke="#000" stroke-width="0.15" xml:space="preserve">Size</text>
<text x="453" y="443.08" font-family="Liberation Mono" font-weight="bold" font-size="6.94" fill="#000" stroke="#000" stroke-width="0.15" xml:space="preserve">1: 0201</text>
<text x="453" y="451.05999999999995" font-family="Liberation Mono" font-weight="bold" font-size="6.94" fill="#000" stroke="#000" stroke-width="0.15" xml:space="preserve">2: 0402</text>
<text x="453" y="459.03999999999996" font-family="Liberation Mono" font-weight="bold" font-size="6.94" fill="#000" stroke="#000" stroke-width="0.15" xml:space="preserve">3: 0603</text>
<text x="453" y="467.02" font-family="Liberation Mono" font-weight="bold" font-size="6.94" fill="#000" stroke="#000" stroke-width="0.15" xml:space="preserve">5: 0805</text>
<text x="453" y="475.0" font-family="Liberation Mono" font-weight="bold" font-size="6.94" fill="#000" stroke="#000" stroke-width="0.15" xml:space="preserve">6: 1206</text>
<text x="453" y="482.97999999999996" font-family="Liberation Mono" font-weight="bold" font-size="6.94" fill="#000" stroke="#000" stroke-width="0.15" xml:space="preserve">0: 1210</text>
<text x="499.3" y="435.09999999999997" font-family="Liberation Mono" font-weight="bold" font-size="6.94" fill="#000" stroke="#000" stroke-width="0.15" xml:space="preserve">Circuit type</text>
<text x="499.3" y="443.08" font-family="Liberation Mono" font-weight="bold" font-size="6.94" fill="#000" stroke="#000" stroke-width="0.15" xml:space="preserve">X: isolated</text>
<text x="499.3" y="451.05999999999995" font-family="Liberation Mono" font-weight="bold" font-size="6.94" fill="#000" stroke="#000" stroke-width="0.15" xml:space="preserve">B: bussed</text>
<rect x="389.5" y="523.3" width="301.5" height="196.7" fill="none" stroke="#808080" stroke-width="1.3"/>
<path d="M389.5 563.3 H691" stroke="#555" stroke-width="0.8" stroke-dasharray="2 1"/>
<path d="M389.5 639.5 H691" stroke="#888" stroke-width="1"/>
<text x="395.5" y="536.4" font-family="Liberation Mono" font-weight="bold" font-size="6.94" fill="#000" stroke="#000" stroke-width="0.15" xml:space="preserve">Naming rule 1 (ceramic caps):</text>
<text x="395.5" y="544.9" font-family="Liberation Mono" font-weight="bold" font-size="6.94" fill="#000" stroke="#000" stroke-width="0.15" xml:space="preserve">  type + value + voltage rating + size + tolerance + dielectric</text>
<text x="395.5" y="553.1" font-family="Liberation Mono" font-weight="bold" font-size="6.94" fill="#000" stroke="#000" stroke-width="0.15" xml:space="preserve">Naming rule 2 (electrolytic caps):</text>
<text x="395.5" y="561.1" font-family="Liberation Mono" font-weight="bold" font-size="6.94" fill="#000" stroke="#000" stroke-width="0.15" xml:space="preserve">  type + value + voltage rating + size + tolerance + ESR</text>
<text x="395.5" y="577.1" font-family="Liberation Mono" font-weight="bold" font-size="6.94" fill="#000" stroke="#000" stroke-width="0.15" xml:space="preserve">Example 1:</text>
<text x="395.5" y="585.1" font-family="Liberation Mono" font-weight="bold" font-size="6.94" fill="#000" stroke="#000" stroke-width="0.15" xml:space="preserve">  SCD1U10V2MX</text>
<text x="395.5" y="593.1" font-family="Liberation Mono" font-weight="bold" font-size="6.94" fill="#000" stroke="#000" stroke-width="0.15" xml:space="preserve">  SC #NAME? SMT Ceramic</text>
<text x="395.5" y="601.1" font-family="Liberation Mono" font-weight="bold" font-size="6.94" fill="#000" stroke="#000" stroke-width="0.15" xml:space="preserve">  D1U #NAME? 0.1uF</text>
<text x="395.5" y="609.1" font-family="Liberation Mono" font-weight="bold" font-size="6.94" fill="#000" stroke="#000" stroke-width="0.15" xml:space="preserve">  10V #NAME? 10V voltage</text>
<text x="395.5" y="617.1" font-family="Liberation Mono" font-weight="bold" font-size="6.94" fill="#000" stroke="#000" stroke-width="0.15" xml:space="preserve">rating</text>
<text x="395.5" y="625.1" font-family="Liberation Mono" font-weight="bold" font-size="6.94" fill="#000" stroke="#000" stroke-width="0.15" xml:space="preserve">  2 #NAME? 0402</text>
<text x="395.5" y="633.1" font-family="Liberation Mono" font-weight="bold" font-size="6.94" fill="#000" stroke="#000" stroke-width="0.15" xml:space="preserve">  M #NAME? ±20% tolerance</text>
<text x="395.5" y="641.1" font-family="Liberation Mono" font-weight="bold" font-size="6.94" fill="#000" stroke="#000" stroke-width="0.15" xml:space="preserve">  X #NAME? X7R/X5R</text>
<text x="523" y="577.1" font-family="Liberation Mono" font-weight="bold" font-size="6.94" fill="#000" stroke="#000" stroke-width="0.15" xml:space="preserve">Example 2:</text>
<text x="523" y="585.1" font-family="Liberation Mono" font-weight="bold" font-size="6.94" fill="#000" stroke="#000" stroke-width="0.15" xml:space="preserve">  ST330U6VD3M9</text>
<text x="523" y="593.1" font-family="Liberation Mono" font-weight="bold" font-size="6.94" fill="#000" stroke="#000" stroke-width="0.15" xml:space="preserve">  ST #NAME? SMT Tantalum</text>
<text x="523" y="601.1" font-family="Liberation Mono" font-weight="bold" font-size="6.94" fill="#000" stroke="#000" stroke-width="0.15" xml:space="preserve">  330U #NAME? 330uF</text>
<text x="523" y="609.1" font-family="Liberation Mono" font-weight="bold" font-size="6.94" fill="#000" stroke="#000" stroke-width="0.15" xml:space="preserve">  6V #NAME? 6.3V voltage</text>
<text x="523" y="617.1" font-family="Liberation Mono" font-weight="bold" font-size="6.94" fill="#000" stroke="#000" stroke-width="0.15" xml:space="preserve">rating</text>
<text x="523" y="625.1" font-family="Liberation Mono" font-weight="bold" font-size="6.94" fill="#000" stroke="#000" stroke-width="0.15" xml:space="preserve">  D3 #NAME? D3 package</text>
<text x="523" y="633.1" font-family="Liberation Mono" font-weight="bold" font-size="6.94" fill="#000" stroke="#000" stroke-width="0.15" xml:space="preserve">  M #NAME? ±20% tolerance</text>
<text x="523" y="641.1" font-family="Liberation Mono" font-weight="bold" font-size="6.94" fill="#000" stroke="#000" stroke-width="0.15" xml:space="preserve">  9 #NAME? 9 mOhm ESR</text>
<text x="395.5" y="649.9" font-family="Liberation Mono" font-weight="bold" font-size="6.94" fill="#000" stroke="#000" stroke-width="0.15" xml:space="preserve">Tolerance</text>
<text x="395.5" y="657.9" font-family="Liberation Mono" font-weight="bold" font-size="6.94" fill="#000" stroke="#000" stroke-width="0.15" xml:space="preserve">B: ±0.1pF</text>
<text x="395.5" y="665.9" font-family="Liberation Mono" font-weight="bold" font-size="6.94" fill="#000" stroke="#000" stroke-width="0.15" xml:space="preserve">C: ±0.25pF</text>
<text x="395.5" y="673.9" font-family="Liberation Mono" font-weight="bold" font-size="6.94" fill="#000" stroke="#000" stroke-width="0.15" xml:space="preserve">D: ±0.5pF</text>
<text x="395.5" y="681.9" font-family="Liberation Mono" font-weight="bold" font-size="6.94" fill="#000" stroke="#000" stroke-width="0.15" xml:space="preserve">F: ±1%</text>
<text x="395.5" y="689.9" font-family="Liberation Mono" font-weight="bold" font-size="6.94" fill="#000" stroke="#000" stroke-width="0.15" xml:space="preserve">G: ±2%</text>
<text x="395.5" y="697.9" font-family="Liberation Mono" font-weight="bold" font-size="6.94" fill="#000" stroke="#000" stroke-width="0.15" xml:space="preserve">J: ±5%</text>
<text x="395.5" y="705.9" font-family="Liberation Mono" font-weight="bold" font-size="6.94" fill="#000" stroke="#000" stroke-width="0.15" xml:space="preserve">K: ±10%</text>
<text x="395.5" y="713.9" font-family="Liberation Mono" font-weight="bold" font-size="6.94" fill="#000" stroke="#000" stroke-width="0.15" xml:space="preserve">M: ±20%</text>
<text x="453" y="649.9" font-family="Liberation Mono" font-weight="bold" font-size="6.94" fill="#000" stroke="#000" stroke-width="0.15" xml:space="preserve">Size</text>
<text x="453" y="657.9" font-family="Liberation Mono" font-weight="bold" font-size="6.94" fill="#000" stroke="#000" stroke-width="0.15" xml:space="preserve">1: 0201</text>
<text x="453" y="665.9" font-family="Liberation Mono" font-weight="bold" font-size="6.94" fill="#000" stroke="#000" stroke-width="0.15" xml:space="preserve">2: 0402</text>
<text x="453" y="673.9" font-family="Liberation Mono" font-weight="bold" font-size="6.94" fill="#000" stroke="#000" stroke-width="0.15" xml:space="preserve">3: 0603</text>
<text x="453" y="681.9" font-family="Liberation Mono" font-weight="bold" font-size="6.94" fill="#000" stroke="#000" stroke-width="0.15" xml:space="preserve">5: 0805</text>
<text x="453" y="689.9" font-family="Liberation Mono" font-weight="bold" font-size="6.94" fill="#000" stroke="#000" stroke-width="0.15" xml:space="preserve">6: 1206</text>
<text x="453" y="697.9" font-family="Liberation Mono" font-weight="bold" font-size="6.94" fill="#000" stroke="#000" stroke-width="0.15" xml:space="preserve">0: 1210</text>
<text x="499.7" y="649.9" font-family="Liberation Mono" font-weight="bold" font-size="6.94" fill="#000" stroke="#000" stroke-width="0.15" xml:space="preserve">Type</text>
<text x="499.7" y="657.9" font-family="Liberation Mono" font-weight="bold" font-size="6.94" fill="#000" stroke="#000" stroke-width="0.15" xml:space="preserve">SC: SMT Ceramic</text>
<text x="499.7" y="665.9" font-family="Liberation Mono" font-weight="bold" font-size="6.94" fill="#000" stroke="#000" stroke-width="0.15" xml:space="preserve">ST: SMT Tantalum</text>
<text x="499.7" y="673.9" font-family="Liberation Mono" font-weight="bold" font-size="6.94" fill="#000" stroke="#000" stroke-width="0.15" xml:space="preserve">SA: SMT Aluminium Electrolytic</text>
<text x="499.7" y="681.9" font-family="Liberation Mono" font-weight="bold" font-size="6.94" fill="#000" stroke="#000" stroke-width="0.15" xml:space="preserve">SP: SMT Aluminium Polymer</text>
<text x="644.4" y="649.9" font-family="Liberation Mono" font-weight="bold" font-size="6.94" fill="#000" stroke="#000" stroke-width="0.15" xml:space="preserve">Dielectric</text>
<text x="644.4" y="657.9" font-family="Liberation Mono" font-weight="bold" font-size="6.94" fill="#000" stroke="#000" stroke-width="0.15" xml:space="preserve">X: X5R/X7R</text>
<text x="644.4" y="665.9" font-family="Liberation Mono" font-weight="bold" font-size="6.94" fill="#000" stroke="#000" stroke-width="0.15" xml:space="preserve">N: NP0/C0G</text>
<text x="814.5" y="382.7" font-family="Liberation Mono" font-size="20.5" letter-spacing="2.5" fill="#000" stroke="#000" stroke-width="0.8">FMU Structural scheme</text>
<rect x="766" y="430" width="87.5" height="22.0" fill="#80ff80" stroke="#b0703a" stroke-width="0.9"/>
<text x="766" y="424.4" font-family="Liberation Sans" font-size="4.3" fill="#3a3aa0">Power Supply</text>
<text x="766" y="429.4" font-family="Liberation Sans" font-size="4.3" fill="#3a3aa0">3_power.SchDoc</text>
<rect x="766" y="465" width="87.5" height="110.5" fill="#80ff80" stroke="#b0703a" stroke-width="0.9"/>
<text x="766" y="458.9" font-family="Liberation Sans" font-size="4.3" fill="#3a3aa0">CAN/RC/I2C/Analog inputs</text>
<text x="766" y="463.4" font-family="Liberation Sans" font-size="4.3" fill="#3a3aa0">7_can_rc_i2c_analog.SchDoc</text>
<rect x="766" y="587" width="87.5" height="21.5" fill="#80ff80" stroke="#b0703a" stroke-width="0.9"/>
<text x="766" y="581.9" font-family="Liberation Sans" font-size="4.3" fill="#3a3aa0">Licenses</text>
<text x="766" y="586.4" font-family="Liberation Sans" font-size="4.3" fill="#3a3aa0">9_licenses.SchDoc</text>
<rect x="888.4" y="430.2" width="75.1" height="107.2" fill="#80ff80" stroke="#b0703a" stroke-width="0.9"/>
<text x="888.4" y="424.4" font-family="Liberation Sans" font-size="4.3" fill="#3a3aa0">CPU</text>
<text x="888.4" y="429.4" font-family="Liberation Sans" font-size="4.3" fill="#3a3aa0">4_cpu.SchDoc</text>
<rect x="1027.3" y="430.2" width="87.2" height="17.3" fill="#80ff80" stroke="#b0703a" stroke-width="0.9"/>
<text x="1027.3" y="424.4" font-family="Liberation Sans" font-size="4.3" fill="#3a3aa0">SPI memory (FM25V02A)</text>
<text x="1027.3" y="429.4" font-family="Liberation Sans" font-size="4.3" fill="#3a3aa0">5_spi_memory.SchDoc</text>
<rect x="1027.3" y="459.4" width="87.2" height="45.9" fill="#80ff80" stroke="#b0703a" stroke-width="0.9"/>
<text x="1027.3" y="452.9" font-family="Liberation Sans" font-size="4.3" fill="#3a3aa0">IMU/Debug Connector</text>
<text x="1027.3" y="457.4" font-family="Liberation Sans" font-size="4.3" fill="#3a3aa0">8_imu&amp;debug_conn.SchDoc</text>
<rect x="1027.3" y="523" width="87.2" height="52.3" fill="#80ff80" stroke="#b0703a" stroke-width="0.9"/>
<text x="1027.3" y="517.4" font-family="Liberation Sans" font-size="4.3" fill="#3a3aa0">Motherboard Connector</text>
<text x="1027.3" y="521.4" font-family="Liberation Sans" font-size="4.3" fill="#3a3aa0">2_mb_conn.SchDoc</text>
<rect x="1027.3" y="598.3" width="87.2" height="23.0" fill="#80ff80" stroke="#b0703a" stroke-width="0.9"/>
<text x="1027.3" y="591.9" font-family="Liberation Sans" font-size="4.3" fill="#3a3aa0">PWM/UART</text>
<text x="1027.3" y="596.4" font-family="Liberation Sans" font-size="4.3" fill="#3a3aa0">6_uart_esc_i2c.SchDoc</text>
<path d="M853.5 470.5 L888.5 470.5" fill="none" stroke="#6262bc" stroke-width="1.0" stroke-linejoin="miter"/>
<path d="M853.5 476.5 L888.5 476.5" fill="none" stroke="#6262bc" stroke-width="1.0" stroke-linejoin="miter"/>
<path d="M853.5 482.5 L888.5 482.5" fill="none" stroke="#6262bc" stroke-width="1.0" stroke-linejoin="miter"/>
<path d="M853.5 508.5 L888.5 508.5" fill="none" stroke="#6262bc" stroke-width="1.0" stroke-linejoin="miter"/>
<path d="M853.5 514.5 L888.5 514.5" fill="none" stroke="#6262bc" stroke-width="1.0" stroke-linejoin="miter"/>
<path d="M870.5 470.5 L870.5 418.5 L1137.5 418.5 L1137.5 540.5 L1114.5 540.5" fill="none" stroke="#6262bc" stroke-width="1.0" stroke-linejoin="miter"/>
<path d="M963.5 436.5 L1027.5 436.5" fill="none" stroke="#6262bc" stroke-width="1.0" stroke-linejoin="miter"/>
<path d="M963.5 494.5 L1027.5 494.5" fill="none" stroke="#6262bc" stroke-width="1.0" stroke-linejoin="miter"/>
<path d="M1010.5 494.5 L1010.5 534.5 L1027.5 534.5" fill="none" stroke="#6262bc" stroke-width="1.0" stroke-linejoin="miter"/>
<path d="M963.5 500.5 L1027.5 500.5" fill="none" stroke="#6262bc" stroke-width="1.0" stroke-linejoin="miter"/>
<path d="M1004.5 500.5 L1004.5 540.5 L1027.5 540.5" fill="none" stroke="#6262bc" stroke-width="1.0" stroke-linejoin="miter"/>
<path d="M853.5 546.5 L1027.5 546.5" fill="none" stroke="#6262bc" stroke-width="1.0" stroke-linejoin="miter"/>
<path d="M853.5 552.5 L1027.5 552.5" fill="none" stroke="#6262bc" stroke-width="1.0" stroke-linejoin="miter"/>
<path d="M853.5 491.3 L888.4 491.3" fill="none" stroke="#c3cff0" stroke-width="3" stroke-linejoin="miter"/>
<path d="M853.5 491.3 L888.4 491.3" fill="none" stroke="#9aaedc" stroke-width="0.8" stroke-dasharray="1.2 1.6"/>
<path d="M853.5 500.2 L888.4 500.2" fill="none" stroke="#c3cff0" stroke-width="3" stroke-linejoin="miter"/>
<path d="M853.5 500.2 L888.4 500.2" fill="none" stroke="#9aaedc" stroke-width="0.8" stroke-dasharray="1.2 1.6"/>
<path d="M963.5 441.9 L1027.3 441.9" fill="none" stroke="#c3cff0" stroke-width="3" stroke-linejoin="miter"/>
<path d="M963.5 441.9 L1027.3 441.9" fill="none" stroke="#9aaedc" stroke-width="0.8" stroke-dasharray="1.2 1.6"/>
<path d="M1015.7 441.9 L1015.7 465 L1027.3 465" fill="none" stroke="#c3cff0" stroke-width="3" stroke-linejoin="miter"/>
<path d="M1015.7 441.9 L1015.7 465 L1027.3 465" fill="none" stroke="#9aaedc" stroke-width="0.8" stroke-dasharray="1.2 1.6"/>
<path d="M963.5 476.5 L1027.3 476.5" fill="none" stroke="#c3cff0" stroke-width="3" stroke-linejoin="miter"/>
<path d="M963.5 476.5 L1027.3 476.5" fill="none" stroke="#9aaedc" stroke-width="0.8" stroke-dasharray="1.2 1.6"/>
<path d="M963.5 482.5 L1027.3 482.5" fill="none" stroke="#c3cff0" stroke-width="3" stroke-linejoin="miter"/>
<path d="M963.5 482.5 L1027.3 482.5" fill="none" stroke="#9aaedc" stroke-width="0.8" stroke-dasharray="1.2 1.6"/>
<path d="M1015.7 482.5 L1015.7 529 L1027.3 529" fill="none" stroke="#c3cff0" stroke-width="3" stroke-linejoin="miter"/>
<path d="M1015.7 482.5 L1015.7 529 L1027.3 529" fill="none" stroke="#9aaedc" stroke-width="0.8" stroke-dasharray="1.2 1.6"/>
<path d="M963.5 526.3 L981.4 526.3 L981.4 558 L1027.3 558" fill="none" stroke="#c3cff0" stroke-width="3" stroke-linejoin="miter"/>
<path d="M963.5 526.3 L981.4 526.3 L981.4 558 L1027.3 558" fill="none" stroke="#9aaedc" stroke-width="0.8" stroke-dasharray="1.2 1.6"/>
<path d="M963.5 532.2 L974.9 532.2 L974.9 616.3 L1027.3 616.3" fill="none" stroke="#c3cff0" stroke-width="3" stroke-linejoin="miter"/>
<path d="M963.5 532.2 L974.9 532.2 L974.9 616.3 L1027.3 616.3" fill="none" stroke="#9aaedc" stroke-width="0.8" stroke-dasharray="1.2 1.6"/>
<path d="M853.5 563.5 L1027.3 563.5" fill="none" stroke="#c3cff0" stroke-width="3" stroke-linejoin="miter"/>
<path d="M853.5 563.5 L1027.3 563.5" fill="none" stroke="#9aaedc" stroke-width="0.8" stroke-dasharray="1.2 1.6"/>
<path d="M853.5 569.4 L1027.3 569.4" fill="none" stroke="#c3cff0" stroke-width="3" stroke-linejoin="miter"/>
<path d="M853.5 569.4 L1027.3 569.4" fill="none" stroke="#9aaedc" stroke-width="0.8" stroke-dasharray="1.2 1.6"/>
<path d="M1114.5 500.2 L1126 500.2 L1126 529" fill="none" stroke="#c3cff0" stroke-width="3" stroke-linejoin="miter"/>
<path d="M1114.5 500.2 L1126 500.2 L1126 529" fill="none" stroke="#9aaedc" stroke-width="0.8" stroke-dasharray="1.2 1.6"/>
<path d="M1114.5 529 L1143.3 529 L1143.3 616.3 L1114.5 616.3" fill="none" stroke="#c3cff0" stroke-width="3" stroke-linejoin="miter"/>
<path d="M1114.5 529 L1143.3 529 L1143.3 616.3 L1114.5 616.3" fill="none" stroke="#9aaedc" stroke-width="0.8" stroke-dasharray="1.2 1.6"/>
<path d="M1114.5 569.3 L1126 569.3 L1126 604.3 L1114.5 604.3" fill="none" stroke="#c3cff0" stroke-width="3" stroke-linejoin="miter"/>
<path d="M1114.5 569.3 L1126 569.3 L1126 604.3 L1114.5 604.3" fill="none" stroke="#9aaedc" stroke-width="0.8" stroke-dasharray="1.2 1.6"/>
<path d="M963.5 520.4 L986.6 520.4 L986.6 604.3 L1027.3 604.3" fill="none" stroke="#00007a" stroke-width="1.7" stroke-linejoin="miter"/>
<path d="M1114.5 563.7 L1138 563.7 L1138 610 L1114.5 610" fill="none" stroke="#00007a" stroke-width="1.7" stroke-linejoin="miter"/>
<circle cx="870.6" cy="470.8" r="1.4" fill="#00007a"/>
<circle cx="1010" cy="494" r="1.3" fill="#00007a"/>
<circle cx="1004.2" cy="500" r="1.3" fill="#00007a"/>
<circle cx="1015.7" cy="441.9" r="3" fill="#00007a"/>
<circle cx="1015.7" cy="482.5" r="3" fill="#00007a"/>
<circle cx="1126" cy="529" r="3" fill="#00007a"/>
<path d="M847.0 468.1 H853.5 V473.5 H847.0 L844.5 470.8 Z" fill="#fff07a" stroke="#b8782a" stroke-width="0.7"/>
<text x="841.7" y="472.3" font-family="Liberation Sans" font-size="4.3" fill="#7a4a10" text-anchor="end">RC_INPUT</text>
<path d="M847.0 473.90000000000003 H853.5 V479.3 H847.0 L844.5 476.6 Z" fill="#fff07a" stroke="#b8782a" stroke-width="0.7"/>
<text x="841.7" y="478.1" font-family="Liberation Sans" font-size="4.3" fill="#7a4a10" text-anchor="end">SBUS_INV</text>
<path d="M844.5 479.8 H851.0 L853.5 482.5 L851.0 485.2 H844.5 Z" fill="#fff07a" stroke="#b8782a" stroke-width="0.7"/>
<text x="841.7" y="484.0" font-family="Liberation Sans" font-size="4.3" fill="#7a4a10" text-anchor="end">FMU_RC_INPUT</text>
<path d="M847.0 488.6 H851.0 L853.5 491.3 L851.0 494.0 H847.0 L844.5 491.3 Z" fill="#d2dcf6" stroke="#a9b9e2" stroke-width="0.6"/>
<text x="841.7" y="492.8" font-family="Liberation Sans" font-size="4.3" fill="#7a4a10" text-anchor="end">I2C</text>
<path d="M847.0 497.6 H851.0 L853.5 500.3 L851.0 503.0 H847.0 L844.5 500.3 Z" fill="#d2dcf6" stroke="#a9b9e2" stroke-width="0.6"/>
<text x="841.7" y="501.8" font-family="Liberation Sans" font-size="4.3" fill="#7a4a10" text-anchor="end">CAN</text>
<path d="M844.5 505.5 H851.0 L853.5 508.2 L851.0 510.9 H844.5 Z" fill="#fff07a" stroke="#b8782a" stroke-width="0.7"/>
<text x="841.7" y="509.7" font-family="Liberation Sans" font-size="4.3" fill="#7a4a10" text-anchor="end">BAT_CURRENT</text>
<path d="M844.5 511.59999999999997 H851.0 L853.5 514.3 L851.0 517.0 H844.5 Z" fill="#fff07a" stroke="#b8782a" stroke-width="0.7"/>
<text x="841.7" y="515.8" font-family="Liberation Sans" font-size="4.3" fill="#7a4a10" text-anchor="end">BAT_VOLTAGE</text>
<path d="M847.0 543.5999999999999 H853.5 V549.0 H847.0 L844.5 546.3 Z" fill="#fff07a" stroke="#b8782a" stroke-width="0.7"/>
<text x="841.7" y="547.8" font-family="Liberation Sans" font-size="4.3" fill="#7a4a10" text-anchor="end">BAT_VOLTAGE_MB</text>
<path d="M847.0 549.5 H853.5 V554.9000000000001 H847.0 L844.5 552.2 Z" fill="#fff07a" stroke="#b8782a" stroke-width="0.7"/>
<text x="841.7" y="553.7" font-family="Liberation Sans" font-size="4.3" fill="#7a4a10" text-anchor="end">BAT_CURRENT_MB</text>
<path d="M847.0 560.8 H851.0 L853.5 563.5 L851.0 566.2 H847.0 L844.5 563.5 Z" fill="#d2dcf6" stroke="#a9b9e2" stroke-width="0.6"/>
<text x="841.7" y="565.0" font-family="Liberation Sans" font-size="4.3" fill="#7a4a10" text-anchor="end">I2C_MB</text>
<path d="M847.0 566.6999999999999 H851.0 L853.5 569.4 L851.0 572.1 H847.0 L844.5 569.4 Z" fill="#d2dcf6" stroke="#a9b9e2" stroke-width="0.6"/>
<text x="841.7" y="570.9" font-family="Liberation Sans" font-size="4.3" fill="#7a4a10" text-anchor="end">CAN_D</text>
<path d="M888.4 468.1 H894.9 L897.4 470.8 L894.9 473.5 H888.4 Z" fill="#fff07a" stroke="#b8782a" stroke-width="0.7"/>
<text x="899.6" y="472.3" font-family="Liberation Sans" font-size="4.3" fill="#7a4a10" text-anchor="start">RC_INPUT</text>
<path d="M888.4 473.90000000000003 H897.4 V479.3 H888.4 Z" fill="#fff07a" stroke="#b8782a" stroke-width="0.7"/>
<text x="899.6" y="478.1" font-family="Liberation Sans" font-size="4.3" fill="#7a4a10" text-anchor="start">SBUS_INV</text>
<path d="M888.4 479.7 H894.9 L897.4 482.4 L894.9 485.09999999999997 H888.4 Z" fill="#fff07a" stroke="#b8782a" stroke-width="0.7"/>
<text x="899.6" y="483.9" font-family="Liberation Sans" font-size="4.3" fill="#7a4a10" text-anchor="start">FMU_RC_INPUT</text>
<path d="M890.9 488.6 H894.9 L897.4 491.3 L894.9 494.0 H890.9 L888.4 491.3 Z" fill="#d2dcf6" stroke="#a9b9e2" stroke-width="0.6"/>
<text x="899.6" y="492.8" font-family="Liberation Sans" font-size="4.3" fill="#7a4a10" text-anchor="start">I2C</text>
<path d="M890.9 497.40000000000003 H894.9 L897.4 500.1 L894.9 502.8 H890.9 L888.4 500.1 Z" fill="#d2dcf6" stroke="#a9b9e2" stroke-width="0.6"/>
<text x="899.6" y="501.6" font-family="Liberation Sans" font-size="4.3" fill="#7a4a10" text-anchor="start">CAN</text>
<path d="M888.4 505.6 H894.9 L897.4 508.3 L894.9 511.0 H888.4 Z" fill="#fff07a" stroke="#b8782a" stroke-width="0.7"/>
<text x="899.6" y="509.8" font-family="Liberation Sans" font-size="4.3" fill="#7a4a10" text-anchor="start">BAT_CURRENT</text>
<path d="M888.4 511.50000000000006 H894.9 L897.4 514.2 L894.9 516.9000000000001 H888.4 Z" fill="#fff07a" stroke="#b8782a" stroke-width="0.7"/>
<text x="899.6" y="515.7" font-family="Liberation Sans" font-size="4.3" fill="#7a4a10" text-anchor="start">BAT_VOLTAGE</text>
<path d="M954.5 433.3 H961.0 L963.5 436 L961.0 438.7 H954.5 Z" fill="#fff07a" stroke="#b8782a" stroke-width="0.7"/>
<text x="951.7" y="437.5" font-family="Liberation Sans" font-size="4.3" fill="#7a4a10" text-anchor="end">SPI2_CS_FRAM</text>
<path d="M957.0 439.2 H961.0 L963.5 441.9 L961.0 444.59999999999997 H957.0 L954.5 441.9 Z" fill="#d2dcf6" stroke="#a9b9e2" stroke-width="0.6"/>
<text x="951.7" y="443.4" font-family="Liberation Sans" font-size="4.3" fill="#7a4a10" text-anchor="end">SPI2</text>
<path d="M957.0 473.8 H961.0 L963.5 476.5 L961.0 479.2 H957.0 L954.5 476.5 Z" fill="#d2dcf6" stroke="#a9b9e2" stroke-width="0.6"/>
<text x="951.7" y="478.0" font-family="Liberation Sans" font-size="4.3" fill="#7a4a10" text-anchor="end">IMU</text>
<path d="M957.0 479.8 H961.0 L963.5 482.5 L961.0 485.2 H957.0 L954.5 482.5 Z" fill="#d2dcf6" stroke="#a9b9e2" stroke-width="0.6"/>
<text x="951.7" y="484.0" font-family="Liberation Sans" font-size="4.3" fill="#7a4a10" text-anchor="end">SWD</text>
<path d="M954.5 491.3 H961.0 L963.5 494 L961.0 496.7 H954.5 Z" fill="#fff07a" stroke="#b8782a" stroke-width="0.7"/>
<text x="951.7" y="495.5" font-family="Liberation Sans" font-size="4.3" fill="#7a4a10" text-anchor="end">IMU_HEAT_CTL</text>
<path d="M954.5 497.3 H961.0 L963.5 500 L961.0 502.7 H954.5 Z" fill="#fff07a" stroke="#b8782a" stroke-width="0.7"/>
<text x="951.7" y="501.5" font-family="Liberation Sans" font-size="4.3" fill="#7a4a10" text-anchor="end">SPWR_ON</text>
<path d="M954.5 517.6999999999999 H963.5 V523.1 H954.5 Z" fill="#fff07a" stroke="#b8782a" stroke-width="0.7"/>
<text x="951.7" y="521.9" font-family="Liberation Sans" font-size="4.3" fill="#7a4a10" text-anchor="end">ESC_M[1..8]</text>
<path d="M957.0 523.5999999999999 H961.0 L963.5 526.3 L961.0 529.0 H957.0 L954.5 526.3 Z" fill="#d2dcf6" stroke="#a9b9e2" stroke-width="0.6"/>
<text x="951.7" y="527.8" font-family="Liberation Sans" font-size="4.3" fill="#7a4a10" text-anchor="end">FMU</text>
<path d="M957.0 529.5 H961.0 L963.5 532.2 L961.0 534.9000000000001 H957.0 L954.5 532.2 Z" fill="#d2dcf6" stroke="#a9b9e2" stroke-width="0.6"/>
<text x="951.7" y="533.7" font-family="Liberation Sans" font-size="4.3" fill="#7a4a10" text-anchor="end">UART</text>
<path d="M1027.3 433.3 H1033.8 L1036.3 436 L1033.8 438.7 H1027.3 Z" fill="#fff07a" stroke="#b8782a" stroke-width="0.7"/>
<text x="1038.5" y="437.5" font-family="Liberation Sans" font-size="4.3" fill="#7a4a10" text-anchor="start">SPI2_CS_FRAM</text>
<path d="M1029.8 439.2 H1033.8 L1036.3 441.9 L1033.8 444.59999999999997 H1029.8 L1027.3 441.9 Z" fill="#d2dcf6" stroke="#a9b9e2" stroke-width="0.6"/>
<text x="1038.5" y="443.4" font-family="Liberation Sans" font-size="4.3" fill="#7a4a10" text-anchor="start">SPI2</text>
<path d="M1029.8 462.3 H1033.8 L1036.3 465 L1033.8 467.7 H1029.8 L1027.3 465 Z" fill="#d2dcf6" stroke="#a9b9e2" stroke-width="0.6"/>
<text x="1038.5" y="466.5" font-family="Liberation Sans" font-size="4.3" fill="#7a4a10" text-anchor="start">SPI2</text>
<path d="M1029.8 473.8 H1033.8 L1036.3 476.5 L1033.8 479.2 H1029.8 L1027.3 476.5 Z" fill="#d2dcf6" stroke="#a9b9e2" stroke-width="0.6"/>
<text x="1038.5" y="478.0" font-family="Liberation Sans" font-size="4.3" fill="#7a4a10" text-anchor="start">IMU</text>
<path d="M1029.8 479.8 H1033.8 L1036.3 482.5 L1033.8 485.2 H1029.8 L1027.3 482.5 Z" fill="#d2dcf6" stroke="#a9b9e2" stroke-width="0.6"/>
<text x="1038.5" y="484.0" font-family="Liberation Sans" font-size="4.3" fill="#7a4a10" text-anchor="start">SWD</text>
<path d="M1027.3 491.3 H1033.8 L1036.3 494 L1033.8 496.7 H1027.3 Z" fill="#fff07a" stroke="#b8782a" stroke-width="0.7"/>
<text x="1038.5" y="495.5" font-family="Liberation Sans" font-size="4.3" fill="#7a4a10" text-anchor="start">IMU_HEAT_CTL</text>
<path d="M1027.3 497.3 H1036.3 V502.7 H1027.3 Z" fill="#fff07a" stroke="#b8782a" stroke-width="0.7"/>
<text x="1038.5" y="501.5" font-family="Liberation Sans" font-size="4.3" fill="#7a4a10" text-anchor="start">SPWR_ON</text>
<path d="M1108.0 497.5 H1112.0 L1114.5 500.2 L1112.0 502.9 H1108.0 L1105.5 500.2 Z" fill="#d2dcf6" stroke="#a9b9e2" stroke-width="0.6"/>
<text x="1102.7" y="501.7" font-family="Liberation Sans" font-size="4.3" fill="#7a4a10" text-anchor="end">UART7_MB</text>
<path d="M1029.8 526.3 H1033.8 L1036.3 529 L1033.8 531.7 H1029.8 L1027.3 529 Z" fill="#d2dcf6" stroke="#a9b9e2" stroke-width="0.6"/>
<text x="1038.5" y="530.5" font-family="Liberation Sans" font-size="4.3" fill="#7a4a10" text-anchor="start">SWD</text>
<path d="M1027.3 532.0 H1033.8 L1036.3 534.7 L1033.8 537.4000000000001 H1027.3 Z" fill="#fff07a" stroke="#b8782a" stroke-width="0.7"/>
<text x="1038.5" y="536.2" font-family="Liberation Sans" font-size="4.3" fill="#7a4a10" text-anchor="start">IMU_HEAT_CTL</text>
<path d="M1027.3 537.5999999999999 H1033.8 L1036.3 540.3 L1033.8 543.0 H1027.3 Z" fill="#fff07a" stroke="#b8782a" stroke-width="0.7"/>
<text x="1038.5" y="541.8" font-family="Liberation Sans" font-size="4.3" fill="#7a4a10" text-anchor="start">SPWR_ON</text>
<path d="M1029.8 543.5999999999999 H1036.3 V549.0 H1029.8 L1027.3 546.3 Z" fill="#fff07a" stroke="#b8782a" stroke-width="0.7"/>
<text x="1038.5" y="547.8" font-family="Liberation Sans" font-size="4.3" fill="#7a4a10" text-anchor="start">BAT_VOLTAGE_MB</text>
<path d="M1029.8 549.5 H1036.3 V554.9000000000001 H1029.8 L1027.3 552.2 Z" fill="#fff07a" stroke="#b8782a" stroke-width="0.7"/>
<text x="1038.5" y="553.7" font-family="Liberation Sans" font-size="4.3" fill="#7a4a10" text-anchor="start">BAT_CURRENT_MB</text>
<path d="M1029.8 555.3 H1033.8 L1036.3 558 L1033.8 560.7 H1029.8 L1027.3 558 Z" fill="#d2dcf6" stroke="#a9b9e2" stroke-width="0.6"/>
<text x="1038.5" y="559.5" font-family="Liberation Sans" font-size="4.3" fill="#7a4a10" text-anchor="start">FMU</text>
<path d="M1029.8 560.9 H1033.8 L1036.3 563.6 L1033.8 566.3000000000001 H1029.8 L1027.3 563.6 Z" fill="#d2dcf6" stroke="#a9b9e2" stroke-width="0.6"/>
<text x="1038.5" y="565.1" font-family="Liberation Sans" font-size="4.3" fill="#7a4a10" text-anchor="start">I2C_MB</text>
<path d="M1029.8 566.5999999999999 H1033.8 L1036.3 569.3 L1033.8 572.0 H1029.8 L1027.3 569.3 Z" fill="#d2dcf6" stroke="#a9b9e2" stroke-width="0.6"/>
<text x="1038.5" y="570.8" font-family="Liberation Sans" font-size="4.3" fill="#7a4a10" text-anchor="start">CAN_D</text>
<path d="M1108.0 526.3 H1112.0 L1114.5 529 L1112.0 531.7 H1108.0 L1105.5 529 Z" fill="#d2dcf6" stroke="#a9b9e2" stroke-width="0.6"/>
<text x="1102.7" y="530.5" font-family="Liberation Sans" font-size="4.3" fill="#7a4a10" text-anchor="end">UART7_MB</text>
<path d="M1105.5 537.5999999999999 H1112.0 L1114.5 540.3 L1112.0 543.0 H1105.5 Z" fill="#fff07a" stroke="#b8782a" stroke-width="0.7"/>
<text x="1102.7" y="541.8" font-family="Liberation Sans" font-size="4.3" fill="#7a4a10" text-anchor="end">RC_INPUT</text>
<path d="M1108.0 561.0 H1114.5 V566.4000000000001 H1108.0 L1105.5 563.7 Z" fill="#fff07a" stroke="#b8782a" stroke-width="0.7"/>
<text x="1102.7" y="565.2" font-family="Liberation Sans" font-size="4.3" fill="#7a4a10" text-anchor="end">M8_ESC_M[1..8]</text>
<path d="M1108.0 566.5999999999999 H1112.0 L1114.5 569.3 L1112.0 572.0 H1108.0 L1105.5 569.3 Z" fill="#d2dcf6" stroke="#a9b9e2" stroke-width="0.6"/>
<text x="1102.7" y="570.8" font-family="Liberation Sans" font-size="4.3" fill="#7a4a10" text-anchor="end">UART MB</text>
<path d="M1027.3 601.5999999999999 H1033.8 L1036.3 604.3 L1033.8 607.0 H1027.3 Z" fill="#fff07a" stroke="#b8782a" stroke-width="0.7"/>
<text x="1038.5" y="605.8" font-family="Liberation Sans" font-size="4.3" fill="#7a4a10" text-anchor="start">ESC_M[1..8]</text>
<path d="M1029.8 613.5999999999999 H1033.8 L1036.3 616.3 L1033.8 619.0 H1029.8 L1027.3 616.3 Z" fill="#d2dcf6" stroke="#a9b9e2" stroke-width="0.6"/>
<text x="1038.5" y="617.8" font-family="Liberation Sans" font-size="4.3" fill="#7a4a10" text-anchor="start">UART</text>
<path d="M1108.0 601.5999999999999 H1112.0 L1114.5 604.3 L1112.0 607.0 H1108.0 L1105.5 604.3 Z" fill="#d2dcf6" stroke="#a9b9e2" stroke-width="0.6"/>
<text x="1102.7" y="605.8" font-family="Liberation Sans" font-size="4.3" fill="#7a4a10" text-anchor="end">UART MB</text>
<path d="M1105.5 607.3 H1114.5 V612.7 H1105.5 Z" fill="#fff07a" stroke="#b8782a" stroke-width="0.7"/>
<text x="1102.7" y="611.5" font-family="Liberation Sans" font-size="4.3" fill="#7a4a10" text-anchor="end">M8_ESC_M[1..8]</text>
<path d="M1108.0 613.5999999999999 H1112.0 L1114.5 616.3 L1112.0 619.0 H1108.0 L1105.5 616.3 Z" fill="#d2dcf6" stroke="#a9b9e2" stroke-width="0.6"/>
<text x="1102.7" y="617.8" font-family="Liberation Sans" font-size="4.3" fill="#7a4a10" text-anchor="end">UART7_MB</text>
<path d="M952 790.5 H1218 M952 802 H1097 M952 813 H1097 M952 819 H1218 M952.5 790 V824 M992.5 802 V813 M1044.5 802 V819 M1097 790 V819 M1161 790 V819" stroke="#a09c94" stroke-width="1.4" fill="none"/>
<text x="955" y="798.5" font-family="Liberation Serif" font-size="4.5" fill="#8b1a1a">Title</text>
<text x="968" y="798.5" font-family="Liberation Serif" font-size="8.5" font-style="italic" font-weight="bold" fill="#900000">Reference</text>
<text x="955" y="809.5" font-family="Liberation Serif" font-size="4.5" fill="#8b1a1a">Size:</text>
<text x="966" y="809.5" font-family="Liberation Serif" font-size="5.5" fill="#2a2ab0">A3</text>
<text x="996" y="809.5" font-family="Liberation Serif" font-size="4.5" fill="#8b1a1a">Number:</text><text x="1013" y="809.5" font-family="Liberation Serif" font-size="4.5" fill="#2a2ab0">*</text>
<text x="1048" y="809.5" font-family="Liberation Serif" font-size="4.5" fill="#8b1a1a">Revision:</text><text x="1066" y="809.5" font-family="Liberation Serif" font-size="5" fill="#2a2ab0">2</text>
<text x="955" y="817.5" font-family="Liberation Serif" font-size="4.5" fill="#8b1a1a">Date:</text><text x="966" y="817.5" font-family="Liberation Serif" font-size="4.5" fill="#2a2ab0">9/15/2025</text>
<text x="1005" y="817.5" font-family="Liberation Serif" font-size="4.5" fill="#8b1a1a">Time:</text><text x="1019" y="817.5" font-family="Liberation Serif" font-size="4.5" fill="#2a2ab0">2:49:45 PM</text>
<text x="1048" y="817.5" font-family="Liberation Serif" font-size="4.5" fill="#8b1a1a">Sheet</text><text x="1060" y="817.5" font-family="Liberation Serif" font-size="4.5" fill="#2a2ab0">1</text><text x="1067" y="817.5" font-family="Liberation Serif" font-size="4.5" fill="#8b1a1a">of</text><text x="1075" y="817.5" font-family="Liberation Serif" font-size="4.5" fill="#2a2ab0">1</text>
<text x="955" y="823.5" font-family="Liberation Serif" font-size="4.5" fill="#8b1a1a">File:</text><text x="966" y="823.5" font-family="Liberation Serif" font-size="4.5" fill="#2a2ab0">1_reference.SchDoc</text>
<circle cx="1101.5" cy="792.5" r="0.7" fill="#1a1aa0"/>
<circle cx="1101.5" cy="798.5" r="0.7" fill="#1a1aa0"/>
<circle cx="1101.5" cy="804.5" r="0.7" fill="#1a1aa0"/>
<circle cx="1101.5" cy="810.5" r="0.7" fill="#1a1aa0"/>
<circle cx="1101.5" cy="815.5" r="0.7" fill="#1a1aa0"/>
<path d="M1167 793 H1216.2 V812.5 Q1216.2 815.8 1213 815.8 H1164 V796 Q1164 793 1167 793 Z" fill="#000"/>
<text x="1166.5" y="810" font-family="Liberation Sans" font-size="14" font-weight="bold" font-style="italic" fill="#fff" stroke="#fff" stroke-width="0.5" textLength="47" lengthAdjust="spacingAndGlyphs">Altium</text>
<path d="M1171.6 781.3 L1171.60 776.40 L1175.84 778.85 Z" fill="#f26b2a"/>
<path d="M1171.6 781.3 L1175.84 778.85 L1175.84 783.75 Z" fill="#e23a7a"/>
<path d="M1171.6 781.3 L1175.84 783.75 L1171.60 786.20 Z" fill="#8a48b8"/>
<path d="M1171.6 781.3 L1171.60 786.20 L1167.36 783.75 Z" fill="#2a78c8"/>
<path d="M1171.6 781.3 L1167.36 783.75 L1167.36 778.85 Z" fill="#2aa860"/>
<path d="M1171.6 781.3 L1167.36 778.85 L1171.60 776.40 Z" fill="#a8c82a"/>
<circle cx="1171.6" cy="781.3" r="1.8" fill="#fefcf8"/>
<text x="1178" y="785.5" font-family="Liberation Sans" font-size="9" fill="#2a2a2a" textLength="38" lengthAdjust="spacingAndGlyphs">CubePilot</text>
</svg>
</div>

<div id="cvhl" class="a"></div>
<!-- RIGHT PANEL -->
<div id="rp" class="a">
<div class="a" style="left:15px;top:9.0px;font-size:12px;font-weight:bold;color:#f6f6f6;line-height:18px">Requirements</div>
<svg class="a" style="left:331px;top:11px" width="11" height="11" viewBox="0 0 11 11"><path d="M1 1 L10 10 M10 1 L1 10" stroke="#d8d8d8" stroke-width="1.2"/></svg>
<div class="a" style="left:-1px;top:35px;width:361px;height:1px;background:#1e1e1e"></div>
<div class="a" style="left:16px;top:60px;width:287px;height:32px;background:#1f1f1f;border-radius:4px"></div>
<svg class="a" style="left:29px;top:67px" width="17" height="17" viewBox="0 0 17 17"><circle cx="7" cy="7" r="5.8" fill="none" stroke="#dcdcdc" stroke-width="1.3"/><path d="M11.2 11.2 L15.3 15.3" stroke="#dcdcdc" stroke-width="1.4"/></svg>
<div class="a" style="left:55.5px;top:68.4px;font-size:12.6px;color:#a3a3a3;line-height:18px;white-space:nowrap">Search requirement</div>
<svg class="a" style="left:317px;top:69px" width="14" height="15" viewBox="0 0 14 15"><path d="M0.8 0.8 H13.2 L8.3 6.8 V13.8 L5.7 12 V6.8 Z" fill="none" stroke="#dcdcdc" stroke-width="1.2" stroke-linejoin="round"/></svg>
<div class="a" style="left:-1px;top:108px;width:361px;height:1px;background:#1e1e1e"></div>
<div class="a" style="left:349px;top:115px;width:4px;height:299px;background:#474747;border-radius:2px"></div>
<div class="a" style="left:16px;top:121px;width:311px;height:123px;background:#373737;border-radius:4px"><svg class="a" style="left:16px;top:9px" width="15" height="16" viewBox="0 0 15 16"><path d="M3 0 H10 L14 4 V14 H3 Z" fill="#8fd6ae"/><path d="M10 0 V4 H14 Z" fill="#b7e6cb"/><rect x="0.5" y="6" width="9.5" height="9.5" fill="#fafafa" stroke="#363636" stroke-width="0.8"/><path d="M2.7 10.6 L4.6 12.5 L8 8.6" fill="none" stroke="#62b98a" stroke-width="1.1"/></svg><div class="a" style="left:39px;top:7.1px;font-size:12.6px;color:#4fb9f5;line-height:18px;letter-spacing:0.1px">FMU-001</div><div class="a" style="left:257px;top:8px;width:38px;height:14px;background:#464646;border-radius:3px"></div><div class="a" style="left:261px;top:8.0px;font-size:12.4px;color:#f2f2f2;line-height:14px;-webkit-text-stroke:0.25px #f2f2f2">0/2</div><svg class="a" style="left:283px;top:13px" width="8" height="5" viewBox="0 0 8 5"><path d="M0.7 0.7 L4 4 L7.3 0.7" fill="none" stroke="#f0f0f0" stroke-width="1.1"/></svg><div class="a" style="left:16px;top:40.2px;font-size:12.9px;color:#f0f0f0;line-height:16px;white-space:nowrap">The FMU shall execute flight control loops at a</div><div class="a" style="left:16px;top:56.2px;font-size:12.9px;color:#f0f0f0;line-height:16px;white-space:nowrap">minimum rate of 200.0Hz.</div><div class="a" style="left:16px;top:88.2px;font-size:12.9px;color:#c2c2c2;line-height:16px;white-space:nowrap">Refers 1 item</div></div>
<div class="a" style="left:16px;top:260px;width:311px;height:92px;background:#373737;border-radius:4px"><svg class="a" style="left:16px;top:9px" width="15" height="16" viewBox="0 0 15 16"><path d="M3 0 H10 L14 4 V14 H3 Z" fill="#8fd6ae"/><path d="M10 0 V4 H14 Z" fill="#b7e6cb"/><rect x="0.5" y="6" width="9.5" height="9.5" fill="#fafafa" stroke="#363636" stroke-width="0.8"/><path d="M2.7 10.6 L4.6 12.5 L8 8.6" fill="none" stroke="#62b98a" stroke-width="1.1"/></svg><div class="a" style="left:39px;top:7.1px;font-size:12.6px;color:#4fb9f5;line-height:18px;letter-spacing:0.1px">FMU-002</div><div class="a" style="left:269px;top:8px;width:26px;height:14px;background:#464646;border-radius:3px"></div><div class="a" style="left:273px;top:8.0px;font-size:12.4px;color:#f2f2f2;line-height:14px;-webkit-text-stroke:0.25px #f2f2f2">0/0</div><div class="a" style="left:16px;top:40.2px;font-size:12.9px;color:#f0f0f0;line-height:16px;white-space:nowrap">The FMU shall support mission planning and</div><div class="a" style="left:16px;top:56.2px;font-size:12.9px;color:#f0f0f0;line-height:16px;white-space:nowrap">execution for flight distances up to 20.0km.</div></div>
<div class="a" style="left:16px;top:368px;width:311px;height:92px;background:#373737;border-radius:4px"><svg class="a" style="left:16px;top:9px" width="15" height="16" viewBox="0 0 15 16"><path d="M3 0 H10 L14 4 V14 H3 Z" fill="#8fd6ae"/><path d="M10 0 V4 H14 Z" fill="#b7e6cb"/><rect x="0.5" y="6" width="9.5" height="9.5" fill="#fafafa" stroke="#363636" stroke-width="0.8"/><path d="M2.7 10.6 L4.6 12.5 L8 8.6" fill="none" stroke="#62b98a" stroke-width="1.1"/></svg><div class="a" style="left:39px;top:7.1px;font-size:12.6px;color:#4fb9f5;line-height:18px;letter-spacing:0.1px">FMU-003</div><div class="a" style="left:260px;top:8px;width:35px;height:14px;background:#2b9a6b;border-radius:3px"></div><div class="a" style="left:264px;top:8.0px;font-size:12.4px;color:#f2f2f2;line-height:14px;-webkit-text-stroke:0.25px #f2f2f2">1/1</div><svg class="a" style="left:283px;top:13px" width="8" height="5" viewBox="0 0 8 5"><path d="M0.7 0.7 L4 4 L7.3 0.7" fill="none" stroke="#f0f0f0" stroke-width="1.1"/></svg><div class="a" style="left:16px;top:40.2px;font-size:12.9px;color:#f0f0f0;line-height:16px;white-space:nowrap">The FMU shall detect communication link loss</div><div class="a" style="left:16px;top:56.2px;font-size:12.9px;color:#f0f0f0;line-height:16px;white-space:nowrap">and initiate return-to-home procedures within...</div></div>
<div class="a" style="left:16px;top:476px;width:311px;height:92px;background:#373737;border-radius:4px"><svg class="a" style="left:16px;top:9px" width="15" height="16" viewBox="0 0 15 16"><path d="M3 0 H10 L14 4 V14 H3 Z" fill="#8fd6ae"/><path d="M10 0 V4 H14 Z" fill="#b7e6cb"/><rect x="0.5" y="6" width="9.5" height="9.5" fill="#fafafa" stroke="#363636" stroke-width="0.8"/><path d="M2.7 10.6 L4.6 12.5 L8 8.6" fill="none" stroke="#62b98a" stroke-width="1.1"/></svg><div class="a" style="left:39px;top:7.1px;font-size:12.6px;color:#4fb9f5;line-height:18px;letter-spacing:0.1px">FMU-004</div><div class="a" style="left:260px;top:8px;width:35px;height:14px;background:#2b9a6b;border-radius:3px"></div><div class="a" style="left:264px;top:8.0px;font-size:12.4px;color:#f2f2f2;line-height:14px;-webkit-text-stroke:0.25px #f2f2f2">1/1</div><svg class="a" style="left:283px;top:13px" width="8" height="5" viewBox="0 0 8 5"><path d="M0.7 0.7 L4 4 L7.3 0.7" fill="none" stroke="#f0f0f0" stroke-width="1.1"/></svg><div class="a" style="left:16px;top:40.2px;font-size:12.9px;color:#f0f0f0;line-height:16px;white-space:nowrap">The FMU shall initiate safe-landing mode within</div><div class="a" style="left:16px;top:56.2px;font-size:12.9px;color:#f0f0f0;line-height:16px;white-space:nowrap">2.0s of critical failure detection</div></div>
<div class="a" style="left:16px;top:584px;width:311px;height:92px;background:#373737;border-radius:4px"><svg class="a" style="left:16px;top:9px" width="15" height="16" viewBox="0 0 15 16"><path d="M3 0 H10 L14 4 V14 H3 Z" fill="#8fd6ae"/><path d="M10 0 V4 H14 Z" fill="#b7e6cb"/><rect x="0.5" y="6" width="9.5" height="9.5" fill="#fafafa" stroke="#363636" stroke-width="0.8"/><path d="M2.7 10.6 L4.6 12.5 L8 8.6" fill="none" stroke="#62b98a" stroke-width="1.1"/></svg><div class="a" style="left:39px;top:7.1px;font-size:12.6px;color:#4fb9f5;line-height:18px;letter-spacing:0.1px">FMU-005</div><div class="a" style="left:269px;top:8px;width:26px;height:14px;background:#464646;border-radius:3px"></div><div class="a" style="left:273px;top:8.0px;font-size:12.4px;color:#f2f2f2;line-height:14px;-webkit-text-stroke:0.25px #f2f2f2">0/0</div><div class="a" style="left:16px;top:40.2px;font-size:12.9px;color:#f0f0f0;line-height:16px;white-space:nowrap">The FMU shall maintain altitude-hold control with</div><div class="a" style="left:16px;top:56.2px;font-size:12.9px;color:#f0f0f0;line-height:16px;white-space:nowrap">a maximum error of 0.5m.</div></div>
<div class="a" style="left:16px;top:692px;width:311px;height:92px;background:#373737;border-radius:4px"><svg class="a" style="left:16px;top:9px" width="15" height="16" viewBox="0 0 15 16"><path d="M3 0 H10 L14 4 V14 H3 Z" fill="#8fd6ae"/><path d="M10 0 V4 H14 Z" fill="#b7e6cb"/><rect x="0.5" y="6" width="9.5" height="9.5" fill="#fafafa" stroke="#363636" stroke-width="0.8"/><path d="M2.7 10.6 L4.6 12.5 L8 8.6" fill="none" stroke="#62b98a" stroke-width="1.1"/></svg><div class="a" style="left:39px;top:7.1px;font-size:12.6px;color:#4fb9f5;line-height:18px;letter-spacing:0.1px">FMU-006</div><div class="a" style="left:269px;top:8px;width:26px;height:14px;background:#464646;border-radius:3px"></div><div class="a" style="left:273px;top:8.0px;font-size:12.4px;color:#f2f2f2;line-height:14px;-webkit-text-stroke:0.25px #f2f2f2">0/0</div><div class="a" style="left:16px;top:40.2px;font-size:12.9px;color:#f0f0f0;line-height:16px;white-space:nowrap">The FMU shall report communication link latency</div><div class="a" style="left:16px;top:56.2px;font-size:12.9px;color:#f0f0f0;line-height:16px;white-space:nowrap">measurements with resolution of 1.0ms</div></div>
</div>

</body></html>
